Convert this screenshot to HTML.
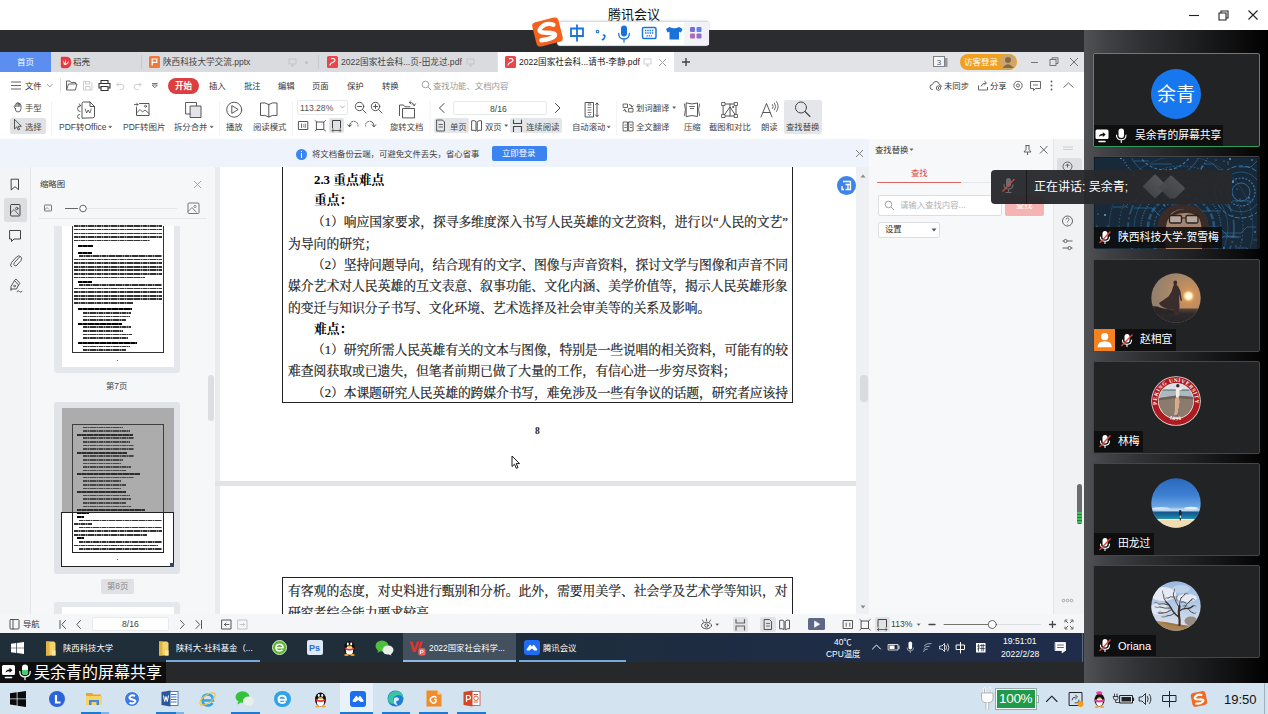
<!DOCTYPE html>
<html><head><meta charset="utf-8">
<style>
*{box-sizing:border-box;margin:0;padding:0}
html,body{width:1268px;height:714px;overflow:hidden;background:#fff}
body{position:relative;font-family:"Liberation Sans",sans-serif;font-size:9px;color:#333}
.a{position:absolute;white-space:nowrap;overflow:hidden}
.v{position:absolute;white-space:nowrap}
svg{position:absolute;overflow:visible}
.t9{font-size:9px;line-height:11px;color:#444}
.doc{font-family:"Liberation Serif",serif;font-size:12.8px;line-height:16px;color:#1a1a1a;height:16px;text-align:justify;text-align-last:justify;white-space:nowrap;overflow:hidden;position:absolute}
.docb{font-family:"Liberation Serif",serif;font-weight:bold;font-size:12.8px;line-height:16px;color:#000;position:absolute;white-space:nowrap}
.s{font-family:"Liberation Sans","Noto Sans CJK SC",sans-serif}
.r{font-family:"Liberation Serif","Noto Serif CJK SC",serif}
</style></head><body>
<!-- ===== TITLE BAR ===== -->
<div class="a" id="titlebar" style="left:0;top:0;width:1268px;height:30px;background:#fff"></div>
<svg style="left:608px;top:18.5px" width="1" height="1"><text class="s" x="0" y="0" font-size="13" fill="#111">腾讯会议</text></svg>
<!-- ===== DARK BANDS / RIGHT PANEL ===== -->
<div class="a" id="darktop" style="left:0;top:30px;width:1084px;height:22px;background:#2a2c2f"></div>
<div class="a" id="rightpanel" style="left:1084px;top:30px;width:184px;height:653px;background:linear-gradient(90deg,#505256 0,#404245 22px,#303235 55px,#202123 105px,#0d0d0e 155px,#000 184px)"></div>
<div class="a" id="darkbot" style="left:0;top:661px;width:1084px;height:22px;background:#26282a"></div>
<!-- ===== SHARED SCREEN ===== -->
<div class="a" id="screen" style="left:0;top:52px;width:1084px;height:609px;background:#fff"></div>
<!--TABBAR-->
<div class="a" style="left:0;top:52px;width:1084px;height:20px;background:#e1e3e7"></div>
<div class="a" style="left:51px;top:52px;width:446px;height:20px;background:#d9dbdf"></div>
<div class="a" style="left:0;top:52px;width:51px;height:20px;background:#5b8ef0;color:#fff;font-size:8.5px;line-height:20px;text-align:center"></div><svg style="left:17px;top:64.95px" width="1" height="1"><text class="s" x="0" y="0" font-size="8.5" fill="#fff">首页</text></svg>
<div class="a" style="left:141px;top:55px;width:1px;height:14px;background:#c8cace"></div>
<div class="a" style="left:318px;top:55px;width:1px;height:14px;background:#c8cace"></div>
<!-- daoke icon -->
<svg style="left:59.500px;top:55.500px" width="12" height="13" viewBox="0 0 12 13"><path d="M1.800 0.800H6Q11.200 0.800 11.200 6.200Q11.200 12.200 5.500 12.200H2.800Q0.800 12.200 0.800 10.200V1.800Q0.800 0.800 1.800 0.800Z" fill="#e8383d"/><path d="M3.300 4L3.600 8.200Q5.500 10 8.300 7.200L8.600 4.500Q7 8 5.700 7.600L6 3Q4.600 5.500 4.800 7.400Z" fill="#fff"/></svg>
<svg style="left:73px;top:64.95px" width="1" height="1"><text class="s" x="0" y="0" font-size="8.5" fill="#333">稻壳</text></svg>
<!-- pptx tab -->
<div class="a" style="left:149px;top:56px;width:11px;height:12px;background:#ed7a3a;border-radius:1.5px"></div>
<svg style="left:149px;top:56px" width="11" height="12" viewBox="0 0 11 12"><path d="M3.2 9.5V3h4.6v3.4H3.2" fill="none" stroke="#fff" stroke-width="1.2"/></svg>
<svg style="left:163px;top:64.98px" width="1" height="1"><text class="s" x="0" y="0" font-size="8.6" fill="#444">陕西科技大学交流.pptx</text></svg>
<svg style="left:288px;top:58px" width="9" height="9" viewBox="0 0 9 9"><rect x="1" y="1" width="7" height="5" fill="none" stroke="#c2c4c8" stroke-width="0.9"/><path d="M3 8h3M4.5 6v2" stroke="#c2c4c8" stroke-width="0.9"/></svg>
<div class="a" style="left:305px;top:60.5px;width:3px;height:3px;border-radius:50%;background:#bfc1c5"></div>
<!-- pdf tab 1 -->
<div class="a" style="left:327px;top:56px;width:11px;height:12px;background:#e8464a;border-radius:1.5px"></div>
<svg style="left:327px;top:56px" width="11" height="12" viewBox="0 0 11 12"><path d="M3 9.5 Q2.6 7.5 5.5 6.5 Q8.6 5.4 7.8 3.4 Q7 2 4 2.8" fill="none" stroke="#fff" stroke-width="1.1"/></svg>
<svg style="left:341px;top:64.98px" width="1" height="1"><text class="s" x="0" y="0" font-size="8.6" fill="#444">2022国家社会科...页-田龙过.pdf</text></svg>
<svg style="left:466px;top:58px" width="9" height="9" viewBox="0 0 9 9"><rect x="1" y="1" width="7" height="5" fill="none" stroke="#c2c4c8" stroke-width="0.9"/><path d="M3 8h3M4.5 6v2" stroke="#c2c4c8" stroke-width="0.9"/></svg>
<!-- active tab -->
<div class="a" style="left:498px;top:52px;width:176px;height:20px;background:#fff"></div>
<div class="a" style="left:505px;top:56px;width:11px;height:12px;background:#e8464a;border-radius:1.5px"></div>
<svg style="left:505px;top:56px" width="11" height="12" viewBox="0 0 11 12"><path d="M3 9.5 Q2.6 7.5 5.5 6.5 Q8.6 5.4 7.8 3.4 Q7 2 4 2.8" fill="none" stroke="#fff" stroke-width="1.1"/></svg>
<svg style="left:519px;top:64.98px" width="1" height="1"><text class="s" x="0" y="0" font-size="8.6" fill="#222">2022国家社会科...请书-李静.pdf</text></svg>
<svg style="left:643px;top:58px" width="9" height="9" viewBox="0 0 9 9"><rect x="1" y="1" width="7" height="5" fill="none" stroke="#c9cbcf" stroke-width="0.9"/><path d="M3 8h3M4.5 6v2" stroke="#c9cbcf" stroke-width="0.9"/></svg>
<svg style="left:658px;top:58px" width="9" height="9" viewBox="0 0 9 9"><path d="M1 1L8 8M8 1L1 8" stroke="#999" stroke-width="0.9"/></svg>
<svg style="left:681px;top:57px" width="10" height="10" viewBox="0 0 10 10"><path d="M5 1V9M1 5H9" stroke="#444" stroke-width="1.4"/></svg>
<!-- right of tabbar -->
<svg style="left:933px;top:55px" width="16" height="13" viewBox="0 0 16 13"><rect x="0.5" y="1.5" width="11" height="10" fill="#f4f5f7" stroke="#777" stroke-width="0.9"/><path d="M12 3h2.5v9H12" fill="#999"/><text x="6" y="10" font-size="8" text-anchor="middle" fill="#555" font-family="Liberation Sans">3</text></svg>
<div class="a" style="left:960px;top:54px;width:57px;height:16px;border-radius:8px;background:#f0a020"></div>
<svg style="left:964px;top:64.95px" width="1" height="1"><text class="s" x="0" y="0" font-size="8.5" fill="#fff">访客登录</text></svg>
<div class="a" style="left:1000px;top:54px;width:16px;height:16px;border-radius:50%;background:#c9a673"></div>
<svg style="left:1000px;top:54px" width="16" height="16" viewBox="0 0 16 16"><circle cx="8" cy="6" r="3" fill="#8a6a3a"/><path d="M2.5 14 Q8 6.5 13.500 14Z" fill="#8a6a3a"/></svg>
<svg style="left:1030px;top:57px" width="52" height="10" viewBox="0 0 52 10"><path d="M1 5.500H8" stroke="#666" stroke-width="0.9"/><rect x="20" y="2.500" width="6" height="6" fill="none" stroke="#666" stroke-width="0.9"/><path d="M22 2.500V0.800H28V6.500H26" fill="none" stroke="#666" stroke-width="0.9"/><path d="M40 1L48 9M48 1L40 9" stroke="#666" stroke-width="0.9"/></svg>
<!--MENUROW-->
<div class="a" style="left:0;top:72px;width:1084px;height:26px;background:#fff"></div>
<svg style="left:10px;top:80px" width="50" height="11" viewBox="0 0 50 11"><path d="M1 2H11M1 5.500H11M1 9H11" stroke="#555" stroke-width="0.9"/><path d="M37 4L39.800 7L42.600 4" fill="none" stroke="#888" stroke-width="0.8"/></svg>
<svg style="left:25px;top:88.91px" width="1" height="1"><text class="s" x="0" y="0" font-size="8.4" fill="#333">文件</text></svg>
<div class="a" style="left:60px;top:78px;width:1px;height:15px;background:#e1e2e5"></div>
<svg style="left:65px;top:79px" width="95" height="13" viewBox="0 0 95 13"><path d="M1.500 11V2H5L6 3.500H10.500V5M1.500 11L3.500 5H12L10.300 11Z" fill="none" stroke="#555" stroke-width="0.9"/>
<path d="M18.500 2.500H25L27 4.500V11H18.500ZM20.500 2.500V5H24.500V2.500M20.500 11V7.500H25V11" fill="none" stroke="#c4c6ca" stroke-width="0.9"/>
<path d="M36 4V1.500H43V4M35.500 9H34V4.500H45V9H43.500M36 7.500H43V11.500H36Z" fill="none" stroke="#333" stroke-width="1.1"/>
<path d="M52 5.500H56.500Q59 5.500 59 8T56.500 10.500H54.500M53.800 3.500L51.800 5.500L53.800 7.500" fill="none" stroke="#c4c6ca" stroke-width="0.9"/>
<path d="M76 5.500H71.500Q69 5.500 69 8T71.500 10.500H73.500M74.200 3.500L76.200 5.500L74.200 7.500" fill="none" stroke="#c4c6ca" stroke-width="0.9"/>
<path d="M87 4.500H92.500M87.300 6L89.800 8.800L92.300 6Z" fill="none" stroke="#555" stroke-width="0.8"/></svg>
<div class="a" style="left:168px;top:78px;width:31px;height:15.500px;border-radius:8px;background:#dc3f3f;color:#fff;font-size:8.6px;font-weight:bold;line-height:15.500px;text-align:center"></div><svg style="left:174.9px;top:88.73px" width="1" height="1"><text class="s" x="0" y="0" font-size="8.6" font-weight="bold" fill="#fff">开始</text></svg>
<svg style="left:209px;top:88.91px" width="1" height="1"><text class="s" x="0" y="0" font-size="8.4" fill="#333">插入</text></svg>
<svg style="left:243.5px;top:88.91px" width="1" height="1"><text class="s" x="0" y="0" font-size="8.4" fill="#333">批注</text></svg>
<svg style="left:278px;top:88.91px" width="1" height="1"><text class="s" x="0" y="0" font-size="8.4" fill="#333">编辑</text></svg>
<svg style="left:312px;top:88.91px" width="1" height="1"><text class="s" x="0" y="0" font-size="8.4" fill="#333">页面</text></svg>
<svg style="left:347px;top:88.91px" width="1" height="1"><text class="s" x="0" y="0" font-size="8.4" fill="#333">保护</text></svg>
<svg style="left:382px;top:88.91px" width="1" height="1"><text class="s" x="0" y="0" font-size="8.4" fill="#333">转换</text></svg>
<svg style="left:421px;top:80px" width="11" height="11" viewBox="0 0 11 11"><circle cx="4.500" cy="4.500" r="3.300" fill="none" stroke="#999" stroke-width="0.9"/><path d="M7 7L10 10" stroke="#999" stroke-width="0.9"/></svg>
<svg style="left:433px;top:88.91px" width="1" height="1"><text class="s" x="0" y="0" font-size="8.4" fill="#999">查找功能、文档内容</text></svg>
<!--MENUROW-R-->
<svg style="left:929px;top:79px" width="150" height="13" viewBox="0 0 150 13"><g fill="none" stroke="#555" stroke-width="0.9">
<path d="M4 10.500H3.500Q1 10.500 1 8T3.500 5.500Q4.200 2.500 7 2.500T10.300 5.500Q12.500 5.800 12.500 8"/><circle cx="9.500" cy="9" r="2.200"/><path d="M9.500 8V10"/>
<path d="M49.500 6.500V11H58.500V8M52 7.500Q53 4 57 4M55.300 2L57.500 4L55.300 6"/>
<circle cx="89" cy="6.500" r="4.200"/><circle cx="89" cy="6.500" r="1.600"/>
<path d="M101.500 2.500H111.500V9.500H106.500L104.500 11.500V9.500H101.500Z"/><path d="M104 6H109" stroke-width="0.8"/>
<path d="M134.500 8.500L139.500 4L144.500 8.500"/></g>
<circle cx="122.500" cy="2.500" r="0.900" fill="#555"/><circle cx="122.500" cy="6.500" r="0.900" fill="#555"/><circle cx="122.500" cy="10.500" r="0.900" fill="#555"/></svg>
<svg style="left:943.5px;top:88.91px" width="1" height="1"><text class="s" x="0" y="0" font-size="8.4" fill="#333">未同步</text></svg>
<svg style="left:990px;top:88.91px" width="1" height="1"><text class="s" x="0" y="0" font-size="8.4" fill="#333">分享</text></svg>
<!--TOOLBAR-->
<div class="a" style="left:0;top:98px;width:1084px;height:41px;background:#fff"></div>
<div class="a" style="left:9.500px;top:117.500px;width:36px;height:16px;background:#e0e2e6;border-radius:2px"></div>
<div class="a" style="left:329px;top:117.500px;width:15px;height:15px;background:#e0e2e6;border-radius:2px"></div>
<div class="a" style="left:433.500px;top:118px;width:35px;height:15px;background:#e4e6ea;border-radius:2px"></div>
<div class="a" style="left:510px;top:118px;width:52px;height:15px;background:#e4e6ea;border-radius:2px"></div>
<div class="a" style="left:783.500px;top:100px;width:38.500px;height:34px;background:#e4e6e9;border-radius:2px"></div>
<div class="a" style="left:296.500px;top:100px;width:51px;height:14.500px;border:1px solid #e6e8ea;border-radius:2px;background:#fff"></div>
<div class="a" style="left:452.500px;top:100.500px;width:94px;height:14.500px;border:1px solid #e6e8ea;border-radius:2px;background:#fff"></div>
<svg style="left:25px;top:111.21px" width="1" height="1"><text class="s" x="0" y="0" font-size="8.4" fill="#444">手型</text></svg>
<svg style="left:25px;top:129.71px" width="1" height="1"><text class="s" x="0" y="0" font-size="8.4" fill="#444">选择</text></svg>
<svg style="left:58.5px;top:130.25px" width="1" height="1"><text class="s" x="0" y="0" font-size="8.5" fill="#444">PDF转Office</text></svg>
<svg style="left:123px;top:130.25px" width="1" height="1"><text class="s" x="0" y="0" font-size="8.5" fill="#444">PDF转图片</text></svg>
<svg style="left:174px;top:130.21px" width="1" height="1"><text class="s" x="0" y="0" font-size="8.4" fill="#444">拆分合并</text></svg>
<svg style="left:226px;top:130.21px" width="1" height="1"><text class="s" x="0" y="0" font-size="8.4" fill="#444">播放</text></svg>
<svg style="left:253px;top:130.21px" width="1" height="1"><text class="s" x="0" y="0" font-size="8.4" fill="#444">阅读模式</text></svg>
<svg style="left:299.5px;top:111.28px" width="1" height="1"><text class="s" x="0" y="0" font-size="8.6" fill="#555">113.28%</text></svg>
<svg style="left:390px;top:130.21px" width="1" height="1"><text class="s" x="0" y="0" font-size="8.4" fill="#444">旋转文档</text></svg>
<svg style="left:489.5px;top:111.78px" width="1" height="1"><text class="s" x="0" y="0" font-size="8.6" fill="#444">8/16</text></svg>
<svg style="left:449.5px;top:129.71px" width="1" height="1"><text class="s" x="0" y="0" font-size="8.4" fill="#444">单页</text></svg>
<svg style="left:485px;top:129.71px" width="1" height="1"><text class="s" x="0" y="0" font-size="8.4" fill="#444">双页</text></svg>
<svg style="left:526px;top:129.71px" width="1" height="1"><text class="s" x="0" y="0" font-size="8.4" fill="#444">连续阅读</text></svg>
<svg style="left:572px;top:130.21px" width="1" height="1"><text class="s" x="0" y="0" font-size="8.4" fill="#444">自动滚动</text></svg>
<svg style="left:636px;top:111.21px" width="1" height="1"><text class="s" x="0" y="0" font-size="8.4" fill="#444">划词翻译</text></svg>
<svg style="left:636px;top:129.71px" width="1" height="1"><text class="s" x="0" y="0" font-size="8.4" fill="#444">全文翻译</text></svg>
<svg style="left:683.5px;top:130.21px" width="1" height="1"><text class="s" x="0" y="0" font-size="8.4" fill="#444">压缩</text></svg>
<svg style="left:709px;top:130.21px" width="1" height="1"><text class="s" x="0" y="0" font-size="8.4" fill="#444">截图和对比</text></svg>
<svg style="left:760.5px;top:130.21px" width="1" height="1"><text class="s" x="0" y="0" font-size="8.4" fill="#444">朗读</text></svg>
<svg style="left:786px;top:130.21px" width="1" height="1"><text class="s" x="0" y="0" font-size="8.4" fill="#444">查找替换</text></svg>
<!--TOOLICONS-->
<svg style="left:0;top:98px" width="1084" height="41" viewBox="0 0 1084 41"><g fill="none" stroke="#444" stroke-width="0.9" stroke-linejoin="round" stroke-linecap="round">
<!-- hand -->
<path d="M15.300 10.500L14.200 8.800Q13.800 7.800 14.800 7.600L15.800 8.500V5.800Q16.300 4.900 17 5.800V5Q17.700 4.200 18.400 5V5.500Q19.100 4.800 19.800 5.600V6.500Q20.600 6 21 7V10.500Q21 14 18 14T15.300 10.500ZM17 5.800V8.500M18.400 5V8.500M19.800 5.600V8.500" stroke-width="0.800"/>
<!-- cursor -->
<path d="M14.500 21.700V31L16.800 28.800L18.300 32L19.600 31.400L18.200 28.300H21Z"/>
<!-- pdf2office -->
<path d="M82 19.800V5.500Q82 4 83.500 4H90L94.500 8.500V18.500Q94.500 19.800 93 19.800ZM90 4V8.500H94.500"/>
<path d="M85.200 11L86.600 15L88.200 12L89.800 15L91.200 11" stroke-width="0.8"/>
<path d="M80.500 7.500Q77.500 7.500 77.500 10.500T80 13.500M79 5.800L80.800 7.500L79 9.200M79.500 16.500Q77.500 16.500 77.500 18.500T79.500 20.500" stroke-width="0.8"/>
<!-- pdf2pic -->
<path d="M139.500 5.500H149V17.500H136.500V9.500"/><path d="M134.500 6.500H138M136.500 5L138 6.500L136.500 8" stroke-width="0.8"/>
<path d="M136.500 15L140 11.500L142.500 14L145 12L149 15.500" stroke-width="0.8"/><circle cx="145.500" cy="8.300" r="1" stroke-width="0.8"/>
<!-- split/merge -->
<path d="M186 4.500H196.500V16H186Z"/><path d="M190.500 8H201V19.500H190.500Z" fill="#e3e5e9"/>
<!-- play -->
<circle cx="234.200" cy="11.700" r="7.500"/><path d="M231.800 8V15.400L237.800 11.700Z"/>
<!-- read mode -->
<path d="M268.800 6.500Q265 4 260.500 5V17.500Q265 16.500 268.800 19Q272.500 16.500 277 17.500V5Q272.500 4 268.800 6.500V19"/>
<!-- zoom out/in -->
<circle cx="359.500" cy="8.500" r="4.200"/><path d="M362.600 11.600L366 15M357.500 8.500H361.500"/>
<circle cx="375.500" cy="8.500" r="4.200"/><path d="M378.600 11.600L382 15M373.500 8.500H377.500M375.500 6.500V10.500"/>
<path d="M340.500 8L342.500 10L344.500 8" stroke="#999" stroke-width="0.8"/>
<!-- row2 small icons -->
<rect x="298.800" y="23.500" width="9" height="8"/><path d="M301.500 26V29.500M305.200 26V29.500M303.400 26.800V27M303.400 28.600V28.800" stroke-width="0.8"/>
<rect x="316.800" y="24" width="7" height="7.500"/><path d="M315 22.500L316.800 24M325.600 22.500L323.800 24M315 33L316.800 31.500M325.600 33L323.800 31.500" stroke-width="0.8"/>
<path d="M332.500 30V22.500H340.500V30" stroke-width="1"/><path d="M332 32.500H341M333.300 31.300L332 32.500L333.300 33.700M339.700 31.300L341 32.500L339.700 33.700" stroke-width="0.8"/>
<path d="M349.500 28.500Q349.500 24 353 23.300" stroke-width="0.9"/><path d="M347.800 26.800L349.500 28.800L351.300 26.800" stroke-width="0.9"/><path d="M354.500 23.300Q358 24 358 28" stroke-dasharray="1.500 1.300" stroke-width="0.8"/>
<path d="M374 28.500Q374 24 370.500 23.300" stroke-width="0.9"/><path d="M372.200 26.800L374 28.800L375.800 26.800" stroke-width="0.9"/><path d="M369 23.300Q365.500 24 365.500 28" stroke-dasharray="1.500 1.300" stroke-width="0.8"/>
<!-- rotate doc -->
<path d="M399.500 17.500V7H403.500L405 8.800H410"/><path d="M402.500 19.500V10.500H414.500V19.500Z"/><path d="M410 4.500Q413.500 4.200 414.200 7.500M412.600 6.300L414.300 7.800L415.500 5.800M410.500 3L409.300 4.600L411 5.800" stroke-width="0.8"/>
<!-- page nav -->
<path d="M444 5.500L439.500 10L444 14.500" stroke-width="1"/><path d="M555.500 5.500L560 10L555.500 14.500" stroke-width="1"/>
<!-- single page -->
<path d="M437 22H442.500L444.500 24V33H437Z"/><path d="M439 26.500H442.500M439 29H442.500" stroke-width="0.8"/>
<!-- double page -->
<path d="M472 22.800Q474.500 22 476 23.500V33Q474.500 31.800 472 32.300ZM477.500 23.500Q479 22 481.500 22.800V32.300Q479 31.800 477.500 33Z"/>
<path d="M505 27L506.200 28.500L507.400 27Z" fill="#555" stroke-width="0.500"/>
<!-- continuous -->
<path d="M513.500 22V25.500H521.500V22M513.500 33.500V28.500H521.500V33.500" stroke-width="1.100"/>
<!-- auto scroll -->
<rect x="585.500" y="4.500" width="8" height="14.500"/><path d="M588 7H591M588 9.500H591M588 12H591M588 14.500H591M588.300 6L589.500 5.300L590.700 6M588.300 16.500L589.500 17.300L590.700 16.500" stroke-width="0.700"/>
<path d="M597 5V18.500M595.500 6.500L597 5L598.500 6.500M595.500 17L597 18.500L598.500 17" stroke-width="0.900"/>
<path d="M607.500 28.500L608.700 30L609.900 28.500Z" fill="#555" stroke-width="0.500"/>
<!-- translate icons -->
<path d="M623.500 6H627.500V9.500H623.500ZM629 10.500H633V14H629ZM629.500 6.500Q632 6.500 632 9M630.800 7.800L632 9.200L633.200 7.800M627 14Q624.500 14 624.500 11.500M623.300 12.600L624.500 11.300L625.700 12.600" stroke-width="0.800"/>
<path d="M673 9L674.200 10.500L675.400 9Z" fill="#555" stroke-width="0.500"/>
<path d="M623.500 24H627.500V33H623.500ZM629 24H633V33H629ZM627.500 25.500L629 24M624.800 27H626.300M624.800 29.500H626.300M630.300 27H631.800M630.300 29.500H631.800" stroke-width="0.800"/>
<!-- compress -->
<path d="M686.500 5Q692 7 697.500 5V18.500Q692 16.500 686.500 18.500Z"/><path d="M684.500 6Q686.500 11.700 684.500 17.500M699.500 6Q697.500 11.700 699.500 17.500M689.500 8.500H694.500M690.300 10.500H693.700" stroke-width="0.800"/>
<!-- screenshot compare -->
<rect x="723.500" y="6" width="12.500" height="12"/><path d="M723.500 18L730 9L736 18M730 6V18" stroke-width="0.900"/>
<rect x="722" y="4.500" width="3" height="3" fill="#fff" stroke-width="0.800"/><rect x="734.500" y="4.500" width="3" height="3" fill="#fff" stroke-width="0.800"/><rect x="722" y="16.500" width="3" height="3" fill="#fff" stroke-width="0.800"/><rect x="734.500" y="16.500" width="3" height="3" fill="#fff" stroke-width="0.800"/>
<circle cx="733" cy="9" r="0.600"/>
<!-- read aloud -->
<path d="M761 19L766.500 5.500L772 19M763 14.500H770"/><path d="M772.500 6.500Q774 8.500 772.500 10.500M774.500 5Q777 8.500 774.500 12M776.500 3.500Q780 8.500 776.500 13.500" stroke-width="0.800"/>
<!-- find replace -->
<circle cx="801" cy="9.500" r="5.500" stroke-width="1"/><path d="M805 13.500L810 18.500" stroke-width="1.100"/>
<!-- dropdown arrows on labels -->
<path d="M109 28.500L110.200 30L111.400 28.500Z" fill="#555" stroke-width="0.500"/>
<path d="M210.500 28.500L211.700 30L212.900 28.500Z" fill="#555" stroke-width="0.500"/>
</g>
<path d="M51.500 3V37M219.500 3V37M292.500 3V37M430 3V37M616.500 3V37" stroke="#f2f3f5" stroke-width="1"/>
</svg>
<!--NOTIFY-->
<div class="a" style="left:0;top:139px;width:869px;height:28px;background:#eff3fb"></div>
<div class="a" style="left:296px;top:148.500px;width:11px;height:11px;border-radius:50%;background:#3a86f2"></div>
<div class="a" style="left:301px;top:150.500px;width:1.400px;height:1.600px;background:#fff"></div>
<div class="a" style="left:301px;top:153px;width:1.400px;height:4.500px;background:#fff"></div>
<svg style="left:311.5px;top:156.91px" width="1" height="1"><text class="s" x="0" y="0" font-size="8.4" fill="#444">将文档备份云端，可避免文件丢失，省心省事</text></svg>
<div class="a" style="left:491.500px;top:146px;width:55px;height:15px;border-radius:2px;background:#3b83f1;color:#fff;font-size:8.4px;line-height:15px;text-align:center"></div><svg style="left:502.2px;top:156.41px" width="1" height="1"><text class="s" x="0" y="0" font-size="8.4" fill="#fff">立即登录</text></svg>
<svg style="left:854.500px;top:149px" width="9" height="9" viewBox="0 0 9 9"><path d="M1 1L8 8M8 1L1 8" stroke="#777" stroke-width="0.9"/></svg>
<!--LEFTSTRIP-->
<div class="a" style="left:0;top:167px;width:30px;height:447px;background:#f3f4f6"></div>
<div class="a" style="left:30px;top:167px;width:1px;height:447px;background:#e6e7ea"></div>
<div class="a" style="left:4px;top:198px;width:23px;height:23.500px;background:#dcdee2;border-radius:2px"></div>
<svg style="left:0;top:167px" width="30" height="140" viewBox="0 0 30 140"><g fill="none" stroke="#444" stroke-width="1" stroke-linejoin="round" stroke-linecap="round">
<path d="M11.500 12.200H18.500V22.700L15 19.700L11.500 22.700Z"/>
<rect x="10.500" y="37.500" width="9.500" height="11.500" rx="1"/><circle cx="16.800" cy="41.500" r="1.200" stroke-width="0.800"/><path d="M10.500 46L14 42.500L18.500 47.500" stroke-width="0.800"/>
<path d="M10 63.500H20.500V72H14L11.500 74.500V72H10Z"/>
<path d="M19.500 90L14.500 95.500Q13 97.500 14.500 98.500T17 98L21 93.500Q22.500 91 20.500 89.500T16.500 90L11.500 95.500Q9.500 98.500 11.500 100" stroke-width="0.900"/>
<path d="M11 123.500V119.500L14.500 113.500L18.500 118L16.500 122H11M14.500 113.500L16 112L20 116.500L18.500 118M17 124.500Q18.500 123 19.500 124.500T22 124.500" stroke-width="0.900"/><circle cx="14.500" cy="119" r="0.900" stroke-width="0.700"/>
</g></svg>
<!--THUMBS-->
<div class="a" style="left:31px;top:167px;width:184px;height:447px;background:#f6f7f9"></div>
<div class="a" style="left:215px;top:167px;width:5px;height:447px;background:#e9ebee"></div>
<svg style="left:39.5px;top:186.91px" width="1" height="1"><text class="s" x="0" y="0" font-size="8.4" fill="#333">缩略图</text></svg>
<svg style="left:193px;top:180px" width="9" height="9" viewBox="0 0 9 9"><path d="M1 1L8 8M8 1L1 8" stroke="#999" stroke-width="0.900"/></svg>
<svg style="left:40px;top:200px" width="165" height="16" viewBox="0 0 165 16"><g fill="none" stroke="#666" stroke-width="0.900">
<rect x="4.500" y="5" width="7" height="6" rx="0.500"/><path d="M4.500 10L7 7.500L9 9.500" stroke-width="0.700"/>
<path d="M25 8.500H38" stroke="#555"/><path d="M46 8.500H137" stroke="#e3e5e8"/><circle cx="43" cy="8.500" r="3.300" fill="#fff" stroke="#555"/>
<rect x="148" y="3" width="11" height="10.500" rx="1"/><path d="M148 11.500L152 7.500L156.500 12.500" stroke-width="0.800"/><circle cx="155" cy="6.500" r="1.100" stroke-width="0.700"/></g></svg>
<div class="a" style="left:39px;top:217.500px;width:168px;height:1px;background:#e3e5e8"></div>
<div class="a" style="left:54px;top:226px;width:126px;height:146.500px;background:#e4e7ec;border-radius:0 0 3px 3px"></div>
<div class="a" style="left:61.500px;top:226px;width:112px;height:141px;background:#fff"></div>
<div class="a" style="left:72px;top:222px;width:91.500px;height:130.500px;border:1px solid #333;background:#fff"></div>
<div class="a" style="left:31px;top:218.500px;width:176px;height:7.500px;background:#f6f7f9"></div>
<div class="a" style="left:73.5px;top:225.0px;width:88.0px;height:1.700px;background:repeating-linear-gradient(90deg,#333 0,#333 1.700px,#8a8a8a 1.700px,#8a8a8a 2.300px)"></div>
<div class="a" style="left:73.5px;top:228.8px;width:88.0px;height:1.700px;background:repeating-linear-gradient(90deg,#333 0,#333 1.700px,#8a8a8a 1.700px,#8a8a8a 2.300px)"></div>
<div class="a" style="left:73.5px;top:232.6px;width:88.0px;height:1.700px;background:repeating-linear-gradient(90deg,#333 0,#333 1.700px,#8a8a8a 1.700px,#8a8a8a 2.300px)"></div>
<div class="a" style="left:73.5px;top:236.1px;width:88.0px;height:1.700px;background:repeating-linear-gradient(90deg,#333 0,#333 1.700px,#8a8a8a 1.700px,#8a8a8a 2.300px)"></div>
<div class="a" style="left:73.5px;top:239.6px;width:76.1px;height:1.700px;background:repeating-linear-gradient(90deg,#333 0,#333 1.700px,#8a8a8a 1.700px,#8a8a8a 2.300px)"></div>
<div class="a" style="left:77.7px;top:245.2px;width:15.1px;height:2.200px;background:repeating-linear-gradient(90deg,#000 0,#000 2px,#444 2px,#444 2.400px)"></div>
<div class="a" style="left:77.7px;top:251.5px;width:13.9px;height:2.200px;background:repeating-linear-gradient(90deg,#000 0,#000 2px,#444 2px,#444 2.400px)"></div>
<div class="a" style="left:79.0px;top:255.3px;width:82.5px;height:1.700px;background:repeating-linear-gradient(90deg,#333 0,#333 1.700px,#8a8a8a 1.700px,#8a8a8a 2.300px)"></div>
<div class="a" style="left:73.5px;top:258.8px;width:88.0px;height:1.700px;background:repeating-linear-gradient(90deg,#333 0,#333 1.700px,#8a8a8a 1.700px,#8a8a8a 2.300px)"></div>
<div class="a" style="left:73.5px;top:262.3px;width:88.0px;height:1.700px;background:repeating-linear-gradient(90deg,#333 0,#333 1.700px,#8a8a8a 1.700px,#8a8a8a 2.300px)"></div>
<div class="a" style="left:73.5px;top:265.9px;width:88.0px;height:1.700px;background:repeating-linear-gradient(90deg,#333 0,#333 1.700px,#8a8a8a 1.700px,#8a8a8a 2.300px)"></div>
<div class="a" style="left:73.5px;top:269.4px;width:88.0px;height:1.700px;background:repeating-linear-gradient(90deg,#333 0,#333 1.700px,#8a8a8a 1.700px,#8a8a8a 2.300px)"></div>
<div class="a" style="left:73.5px;top:272.9px;width:88.0px;height:1.700px;background:repeating-linear-gradient(90deg,#333 0,#333 1.700px,#8a8a8a 1.700px,#8a8a8a 2.300px)"></div>
<div class="a" style="left:73.5px;top:276.5px;width:71.1px;height:1.700px;background:repeating-linear-gradient(90deg,#333 0,#333 1.700px,#8a8a8a 1.700px,#8a8a8a 2.300px)"></div>
<div class="a" style="left:77.7px;top:280.5px;width:13.9px;height:2.200px;background:repeating-linear-gradient(90deg,#000 0,#000 2px,#444 2px,#444 2.400px)"></div>
<div class="a" style="left:79.0px;top:284.3px;width:82.5px;height:1.700px;background:repeating-linear-gradient(90deg,#333 0,#333 1.700px,#8a8a8a 1.700px,#8a8a8a 2.300px)"></div>
<div class="a" style="left:73.5px;top:287.8px;width:88.0px;height:1.700px;background:repeating-linear-gradient(90deg,#333 0,#333 1.700px,#8a8a8a 1.700px,#8a8a8a 2.300px)"></div>
<div class="a" style="left:73.5px;top:291.3px;width:88.0px;height:1.700px;background:repeating-linear-gradient(90deg,#333 0,#333 1.700px,#8a8a8a 1.700px,#8a8a8a 2.300px)"></div>
<div class="a" style="left:73.5px;top:294.9px;width:88.0px;height:1.700px;background:repeating-linear-gradient(90deg,#333 0,#333 1.700px,#8a8a8a 1.700px,#8a8a8a 2.300px)"></div>
<div class="a" style="left:73.5px;top:298.4px;width:88.0px;height:1.700px;background:repeating-linear-gradient(90deg,#333 0,#333 1.700px,#8a8a8a 1.700px,#8a8a8a 2.300px)"></div>
<div class="a" style="left:73.5px;top:301.9px;width:59.7px;height:1.700px;background:repeating-linear-gradient(90deg,#333 0,#333 1.700px,#8a8a8a 1.700px,#8a8a8a 2.300px)"></div>
<div class="a" style="left:77.7px;top:308.3px;width:54.2px;height:2.200px;background:repeating-linear-gradient(90deg,#000 0,#000 2px,#444 2px,#444 2.400px)"></div>
<div class="a" style="left:82.8px;top:312.0px;width:47.9px;height:1.700px;background:repeating-linear-gradient(90deg,#333 0,#333 1.700px,#8a8a8a 1.700px,#8a8a8a 2.300px)"></div>
<div class="a" style="left:82.8px;top:315.6px;width:47.4px;height:1.700px;background:repeating-linear-gradient(90deg,#333 0,#333 1.700px,#8a8a8a 1.700px,#8a8a8a 2.300px)"></div>
<div class="a" style="left:82.8px;top:319.1px;width:42.9px;height:1.700px;background:repeating-linear-gradient(90deg,#333 0,#333 1.700px,#8a8a8a 1.700px,#8a8a8a 2.300px)"></div>
<div class="a" style="left:77.7px;top:322.6px;width:44.1px;height:2.200px;background:repeating-linear-gradient(90deg,#000 0,#000 2px,#444 2px,#444 2.400px)"></div>
<div class="a" style="left:82.8px;top:326.4px;width:48.4px;height:1.700px;background:repeating-linear-gradient(90deg,#333 0,#333 1.700px,#8a8a8a 1.700px,#8a8a8a 2.300px)"></div>
<div class="a" style="left:82.8px;top:329.9px;width:40.4px;height:1.700px;background:repeating-linear-gradient(90deg,#333 0,#333 1.700px,#8a8a8a 1.700px,#8a8a8a 2.300px)"></div>
<div class="a" style="left:82.8px;top:333.5px;width:49.2px;height:1.700px;background:repeating-linear-gradient(90deg,#333 0,#333 1.700px,#8a8a8a 1.700px,#8a8a8a 2.300px)"></div>
<div class="a" style="left:82.8px;top:337.0px;width:45.4px;height:1.700px;background:repeating-linear-gradient(90deg,#333 0,#333 1.700px,#8a8a8a 1.700px,#8a8a8a 2.300px)"></div>
<div class="a" style="left:77.7px;top:342.1px;width:59.3px;height:2.200px;background:repeating-linear-gradient(90deg,#000 0,#000 2px,#444 2px,#444 2.400px)"></div>
<div class="a" style="left:82.8px;top:345.6px;width:47.4px;height:1.700px;background:repeating-linear-gradient(90deg,#333 0,#333 1.700px,#8a8a8a 1.700px,#8a8a8a 2.300px)"></div>
<div class="a" style="left:82.8px;top:349.4px;width:42.9px;height:1.700px;background:repeating-linear-gradient(90deg,#333 0,#333 1.700px,#8a8a8a 1.700px,#8a8a8a 2.300px)"></div>
<div class="a" style="left:116.500px;top:359.500px;width:1.500px;height:1.500px;background:#666"></div>
<svg style="left:106px;top:388.91px" width="1" height="1"><text class="s" x="0" y="0" font-size="8.4" fill="#444">第7页</text></svg>
<div class="a" style="left:54px;top:401.500px;width:126px;height:172px;background:#e0e3e8;border-radius:3px"></div>
<div class="a" style="left:61.500px;top:408px;width:112px;height:158.500px;background:#fff"></div>
<div class="a" style="left:72px;top:424px;width:91.500px;height:129px;border:1px solid #222;background:#fff"></div>
<div class="a" style="left:83.0px;top:426.6px;width:40.3px;height:1.700px;background:repeating-linear-gradient(90deg,#333 0,#333 1.700px,#8a8a8a 1.700px,#8a8a8a 2.300px)"></div>
<div class="a" style="left:83.0px;top:430.2px;width:46.8px;height:1.700px;background:repeating-linear-gradient(90deg,#333 0,#333 1.700px,#8a8a8a 1.700px,#8a8a8a 2.300px)"></div>
<div class="a" style="left:77.4px;top:433.5px;width:55.2px;height:2.200px;background:repeating-linear-gradient(90deg,#000 0,#000 2px,#444 2px,#444 2.400px)"></div>
<div class="a" style="left:83.0px;top:437.4px;width:51.0px;height:1.700px;background:repeating-linear-gradient(90deg,#333 0,#333 1.700px,#8a8a8a 1.700px,#8a8a8a 2.300px)"></div>
<div class="a" style="left:83.0px;top:441.0px;width:46.8px;height:1.700px;background:repeating-linear-gradient(90deg,#333 0,#333 1.700px,#8a8a8a 1.700px,#8a8a8a 2.300px)"></div>
<div class="a" style="left:83.0px;top:444.5px;width:51.0px;height:1.700px;background:repeating-linear-gradient(90deg,#333 0,#333 1.700px,#8a8a8a 1.700px,#8a8a8a 2.300px)"></div>
<div class="a" style="left:83.0px;top:448.1px;width:51.0px;height:1.700px;background:repeating-linear-gradient(90deg,#333 0,#333 1.700px,#8a8a8a 1.700px,#8a8a8a 2.300px)"></div>
<div class="a" style="left:77.4px;top:451.5px;width:49.6px;height:2.200px;background:repeating-linear-gradient(90deg,#000 0,#000 2px,#444 2px,#444 2.400px)"></div>
<div class="a" style="left:83.0px;top:455.3px;width:51.0px;height:1.700px;background:repeating-linear-gradient(90deg,#333 0,#333 1.700px,#8a8a8a 1.700px,#8a8a8a 2.300px)"></div>
<div class="a" style="left:83.0px;top:458.9px;width:40.3px;height:1.700px;background:repeating-linear-gradient(90deg,#333 0,#333 1.700px,#8a8a8a 1.700px,#8a8a8a 2.300px)"></div>
<div class="a" style="left:83.0px;top:462.5px;width:38.4px;height:1.700px;background:repeating-linear-gradient(90deg,#333 0,#333 1.700px,#8a8a8a 1.700px,#8a8a8a 2.300px)"></div>
<div class="a" style="left:83.0px;top:466.0px;width:48.2px;height:1.700px;background:repeating-linear-gradient(90deg,#333 0,#333 1.700px,#8a8a8a 1.700px,#8a8a8a 2.300px)"></div>
<div class="a" style="left:83.0px;top:469.6px;width:42.6px;height:1.700px;background:repeating-linear-gradient(90deg,#333 0,#333 1.700px,#8a8a8a 1.700px,#8a8a8a 2.300px)"></div>
<div class="a" style="left:77.4px;top:473.0px;width:62.2px;height:2.200px;background:repeating-linear-gradient(90deg,#000 0,#000 2px,#444 2px,#444 2.400px)"></div>
<div class="a" style="left:83.0px;top:476.8px;width:51.0px;height:1.700px;background:repeating-linear-gradient(90deg,#333 0,#333 1.700px,#8a8a8a 1.700px,#8a8a8a 2.300px)"></div>
<div class="a" style="left:83.0px;top:480.4px;width:38.4px;height:1.700px;background:repeating-linear-gradient(90deg,#333 0,#333 1.700px,#8a8a8a 1.700px,#8a8a8a 2.300px)"></div>
<div class="a" style="left:83.0px;top:484.0px;width:42.6px;height:1.700px;background:repeating-linear-gradient(90deg,#333 0,#333 1.700px,#8a8a8a 1.700px,#8a8a8a 2.300px)"></div>
<div class="a" style="left:83.0px;top:487.5px;width:38.4px;height:1.700px;background:repeating-linear-gradient(90deg,#333 0,#333 1.700px,#8a8a8a 1.700px,#8a8a8a 2.300px)"></div>
<div class="a" style="left:77.4px;top:490.9px;width:48.2px;height:2.200px;background:repeating-linear-gradient(90deg,#000 0,#000 2px,#444 2px,#444 2.400px)"></div>
<div class="a" style="left:83.0px;top:494.7px;width:46.8px;height:1.700px;background:repeating-linear-gradient(90deg,#333 0,#333 1.700px,#8a8a8a 1.700px,#8a8a8a 2.300px)"></div>
<div class="a" style="left:83.0px;top:498.3px;width:48.2px;height:1.700px;background:repeating-linear-gradient(90deg,#333 0,#333 1.700px,#8a8a8a 1.700px,#8a8a8a 2.300px)"></div>
<div class="a" style="left:83.0px;top:501.9px;width:42.6px;height:1.700px;background:repeating-linear-gradient(90deg,#333 0,#333 1.700px,#8a8a8a 1.700px,#8a8a8a 2.300px)"></div>
<div class="a" style="left:83.0px;top:505.5px;width:48.2px;height:1.700px;background:repeating-linear-gradient(90deg,#333 0,#333 1.700px,#8a8a8a 1.700px,#8a8a8a 2.300px)"></div>
<div class="a" style="left:77.4px;top:508.8px;width:67.8px;height:2.200px;background:repeating-linear-gradient(90deg,#000 0,#000 2px,#444 2px,#444 2.400px)"></div>
<div class="a" style="left:77.4px;top:512.3px;width:11.8px;height:2.200px;background:repeating-linear-gradient(90deg,#000 0,#000 2px,#444 2px,#444 2.400px)"></div>
<div class="a" style="left:77.4px;top:515.7px;width:6.7px;height:2.200px;background:repeating-linear-gradient(90deg,#000 0,#000 2px,#444 2px,#444 2.400px)"></div>
<div class="a" style="left:79.0px;top:519.6px;width:82.5px;height:1.700px;background:repeating-linear-gradient(90deg,#333 0,#333 1.700px,#8a8a8a 1.700px,#8a8a8a 2.300px)"></div>
<div class="a" style="left:73.5px;top:522.9px;width:18.5px;height:1.700px;background:repeating-linear-gradient(90deg,#333 0,#333 1.700px,#8a8a8a 1.700px,#8a8a8a 2.300px)"></div>
<div class="a" style="left:79.0px;top:526.6px;width:82.5px;height:1.700px;background:repeating-linear-gradient(90deg,#333 0,#333 1.700px,#8a8a8a 1.700px,#8a8a8a 2.300px)"></div>
<div class="a" style="left:73.5px;top:530.2px;width:88.0px;height:1.700px;background:repeating-linear-gradient(90deg,#333 0,#333 1.700px,#8a8a8a 1.700px,#8a8a8a 2.300px)"></div>
<div class="a" style="left:73.5px;top:533.9px;width:73.1px;height:1.700px;background:repeating-linear-gradient(90deg,#333 0,#333 1.700px,#8a8a8a 1.700px,#8a8a8a 2.300px)"></div>
<div class="a" style="left:77.4px;top:537.0px;width:6.7px;height:2.200px;background:repeating-linear-gradient(90deg,#000 0,#000 2px,#444 2px,#444 2.400px)"></div>
<div class="a" style="left:79.0px;top:540.9px;width:82.5px;height:1.700px;background:repeating-linear-gradient(90deg,#333 0,#333 1.700px,#8a8a8a 1.700px,#8a8a8a 2.300px)"></div>
<div class="a" style="left:73.5px;top:544.5px;width:84.3px;height:1.700px;background:repeating-linear-gradient(90deg,#333 0,#333 1.700px,#8a8a8a 1.700px,#8a8a8a 2.300px)"></div>
<div class="a" style="left:79.0px;top:548.1px;width:82.5px;height:1.700px;background:repeating-linear-gradient(90deg,#333 0,#333 1.700px,#8a8a8a 1.700px,#8a8a8a 2.300px)"></div>
<div class="a" style="left:116.500px;top:558.500px;width:1.500px;height:1.500px;background:#666"></div>
<div class="a" style="left:61.500px;top:408px;width:112px;height:104px;background:rgba(90,90,90,0.500)"></div>
<div class="a" style="left:61px;top:511.500px;width:113px;height:55.500px;border:1px solid #222"></div>
<div class="a" style="left:170px;top:563px;width:4px;height:4px;background:#3a4560"></div>
<div class="a" style="left:101px;top:579px;width:32.500px;height:14.500px;background:#dfe1e5;border-radius:2px;color:#888;font-size:8.400px;line-height:14.500px;text-align:center"></div><svg style="left:106.52px;top:589.16px" width="1" height="1"><text class="s" x="0" y="0" font-size="8.4" fill="#888">第8页</text></svg>
<div class="a" style="left:54px;top:602px;width:126px;height:12px;background:#e4e7ec;border-radius:3px 3px 0 0"></div>
<div class="a" style="left:61.500px;top:607px;width:112px;height:7px;background:#fff"></div>
<div class="a" style="left:207.500px;top:375px;width:6.500px;height:46px;background:#dcdee2;border-radius:3px"></div>
<!--DOC-->
<div class="a" style="left:220px;top:167px;width:635.500px;height:447px;background:#fff"></div>
<div class="a" style="left:215px;top:481px;width:641px;height:5px;background:#e1e3e6"></div>
<div class="a" style="left:855.500px;top:167px;width:13.500px;height:447px;background:#eef0f3"></div>
<div class="a" style="left:860px;top:374.500px;width:7.500px;height:27.500px;background:#d9dbdf;border-radius:3.500px"></div>
<svg style="left:859px;top:173px" width="8" height="6" viewBox="0 0 8 6"><path d="M1.500 4.500L4 1.500L6.500 4.500Z" fill="#888"/></svg>
<svg style="left:859px;top:604px" width="8" height="6" viewBox="0 0 8 6"><path d="M1.500 1.500L4 4.500L6.500 1.500Z" fill="#888"/></svg>
<div class="a" style="left:281.500px;top:167px;width:511.500px;height:235.500px;border:1.300px solid #222;border-top:none"></div>
<div class="a" style="left:281.500px;top:577px;width:511.500px;height:40px;border:1.300px solid #222;border-bottom:none"></div>
<svg style="left:313.5px;top:183.62px" width="1" height="1"><text class="r" x="0" y="0" font-size="12.8" font-weight="bold" fill="#000">2.3 重点难点</text></svg>
<svg style="left:313.5px;top:204.42px" width="1" height="1"><text class="r" x="0" y="0" font-size="12.8" font-weight="bold" fill="#000">重点：</text></svg>
<svg style="left:311.5px;top:226.12px" width="1" height="1"><text class="r" x="0" y="0" font-size="12.8" fill="#1a1a1a" stroke="#1a1a1a" stroke-width="0.19" textLength="476" lengthAdjust="spacing">（1）响应国家要求，探寻多维度深入书写人民英雄的文艺资料，进行以“人民的文艺”</text></svg>
<svg style="left:288px;top:247.52px" width="1" height="1"><text class="r" x="0" y="0" font-size="12.8" fill="#1a1a1a" stroke="#1a1a1a" stroke-width="0.19">为导向的研究；</text></svg>
<svg style="left:311.5px;top:268.92px" width="1" height="1"><text class="r" x="0" y="0" font-size="12.8" fill="#1a1a1a" stroke="#1a1a1a" stroke-width="0.19" textLength="476" lengthAdjust="spacing">（2）坚持问题导向，结合现有的文字、图像与声音资料，探讨文学与图像和声音不同</text></svg>
<svg style="left:288px;top:290.32px" width="1" height="1"><text class="r" x="0" y="0" font-size="12.8" fill="#1a1a1a" stroke="#1a1a1a" stroke-width="0.19" textLength="499.5" lengthAdjust="spacing">媒介艺术对人民英雄的互文表意、叙事功能、文化内涵、美学价值等，揭示人民英雄形象</text></svg>
<svg style="left:288px;top:311.72px" width="1" height="1"><text class="r" x="0" y="0" font-size="12.8" fill="#1a1a1a" stroke="#1a1a1a" stroke-width="0.19">的变迁与知识分子书写、文化环境、艺术选择及社会审美等的关系及影响。</text></svg>
<svg style="left:313.5px;top:333.12px" width="1" height="1"><text class="r" x="0" y="0" font-size="12.8" font-weight="bold" fill="#000">难点：</text></svg>
<svg style="left:311.5px;top:353.92px" width="1" height="1"><text class="r" x="0" y="0" font-size="12.8" fill="#1a1a1a" stroke="#1a1a1a" stroke-width="0.19" textLength="476" lengthAdjust="spacing">（1）研究所需人民英雄有关的文本与图像，特别是一些说唱的相关资料，可能有的较</text></svg>
<svg style="left:288px;top:375.32px" width="1" height="1"><text class="r" x="0" y="0" font-size="12.8" fill="#1a1a1a" stroke="#1a1a1a" stroke-width="0.19">难查阅获取或已遗失，但笔者前期已做了大量的工作，有信心进一步穷尽资料；</text></svg>
<svg style="left:311.5px;top:396.72px" width="1" height="1"><text class="r" x="0" y="0" font-size="12.8" fill="#1a1a1a" stroke="#1a1a1a" stroke-width="0.19" textLength="476" lengthAdjust="spacing">（2）本课题研究人民英雄的跨媒介书写，难免涉及一些有争议的话题，研究者应该持</text></svg>
<svg style="left:534.5px;top:434.21px" width="1" height="1"><text class="r" x="0" y="0" font-size="9.5" font-weight="bold" fill="#222">8</text></svg>
<svg style="left:288px;top:595.12px" width="1" height="1"><text class="r" x="0" y="0" font-size="12.8" fill="#1a1a1a" stroke="#1a1a1a" stroke-width="0.19" textLength="499.5" lengthAdjust="spacing">有客观的态度，对史料进行甄别和分析。此外，需要用美学、社会学及艺术学等知识，对</text></svg>
<svg style="left:288px;top:616.52px" width="1" height="1"><text class="r" x="0" y="0" font-size="12.8" fill="#1a1a1a" stroke="#1a1a1a" stroke-width="0.19">研究者综合能力要求较高。</text></svg>
<svg style="left:511px;top:455px" width="10" height="15" viewBox="0 0 10 15"><path d="M1 1V11.500L3.500 9.200L5.300 13.300L7 12.500L5.200 8.600H8.500Z" fill="#fff" stroke="#000" stroke-width="0.900" stroke-linejoin="round"/></svg>
<div class="a" style="left:837px;top:176px;width:19px;height:19px;border-radius:50%;background:#3d83ea"></div>
<svg style="left:837px;top:176px" width="19" height="19" viewBox="0 0 19 19"><path d="M6 5.500H13.500V13.500H8.500M8.500 8.500H13.500M11 8.500V13.500M5 10V13.500H7" fill="none" stroke="#fff" stroke-width="1.300"/></svg>
<!--FIND-->
<div class="a" style="left:869px;top:139px;width:184px;height:475px;background:#f7f8fa"></div>
<div class="a" style="left:1053px;top:139px;width:31px;height:475px;background:#f1f2f4;border-left:1px solid #e4e6e9"></div>
<svg style="left:874.5px;top:152.91px" width="1" height="1"><text class="s" x="0" y="0" font-size="8.4" fill="#333">查找替换</text></svg>
<svg style="left:909px;top:148px" width="5" height="4" viewBox="0 0 5 4"><path d="M0.500 0.500L2.500 3L4.500 0.500Z" fill="#666"/></svg>
<svg style="left:1021px;top:144px" width="30" height="12" viewBox="0 0 30 12"><g fill="none" stroke="#555" stroke-width="0.900"><path d="M4.500 1.500H8.500M5 1.500V5.500L3 8H10L8 5.500V1.500M6.500 8V11"/><path d="M19 2L26.500 9.500M26.500 2L19 9.500"/></g></svg>
<svg style="left:910.5px;top:175.91px" width="1" height="1"><text class="s" x="0" y="0" font-size="8.4" fill="#d9433f">查找</text></svg>
<div class="a" style="left:877px;top:182px;width:169px;height:1px;background:#e6e7ea"></div>
<div class="a" style="left:877px;top:181.500px;width:84px;height:1.500px;background:#e0635f"></div>
<div class="a" style="left:877.500px;top:195px;width:124px;height:21px;background:#fff;border:1px solid #dcdee1;border-radius:2px"></div>
<svg style="left:884px;top:200px" width="11" height="11" viewBox="0 0 11 11"><circle cx="4.500" cy="4.500" r="3.300" fill="none" stroke="#999" stroke-width="0.900"/><path d="M7 7L10 10" stroke="#999" stroke-width="0.900"/></svg>
<svg style="left:899.5px;top:208.41px" width="1" height="1"><text class="s" x="0" y="0" font-size="8.4" fill="#b0b2b6">请输入查找内容...</text></svg>
<div class="a" style="left:1005px;top:195px;width:39px;height:21px;background:#f5b3b1;border-radius:2px;color:#fff;font-size:8.400px;line-height:21px;text-align:center"></div><svg style="left:1016.1px;top:208.41px" width="1" height="1"><text class="s" x="0" y="0" font-size="8.4" fill="#fff">查找</text></svg>
<div class="a" style="left:877.500px;top:221.500px;width:62px;height:16.500px;background:#fff;border:1px solid #dcdee1;border-radius:2px"></div>
<svg style="left:885px;top:232.41px" width="1" height="1"><text class="s" x="0" y="0" font-size="8.4" fill="#333">设置</text></svg>
<svg style="left:931px;top:228px" width="6" height="4" viewBox="0 0 6 4"><path d="M0.500 0.500L3 3.500L5.500 0.500Z" fill="#555"/></svg>
<div class="a" style="left:1057px;top:158px;width:25px;height:24px;background:#dddfe3;border-radius:2px"></div>
<svg style="left:1054px;top:139px" width="30" height="475" viewBox="0 0 30 475"><g fill="none" stroke="#555" stroke-width="0.900">
<path d="M9 8H19M9 10.500H19" stroke="#c8cace"/>
<circle cx="13.500" cy="27.500" r="4.500"/><path d="M13.500 25V28.500M11.500 27L13.500 25L15.500 27"/>
<circle cx="13.500" cy="82" r="5"/><path d="M12 80.500Q12 79 13.500 79T15 80.500Q15 81.500 13.500 82.500V83.500M13.500 85V85.500" stroke-width="0.800"/>
<path d="M8.500 102H18.500M8.500 109H18.500" /><circle cx="11.500" cy="102" r="1.600" fill="#f1f2f4"/><circle cx="15.500" cy="109" r="1.600" fill="#f1f2f4"/>
<circle cx="9.500" cy="461.500" r="1.300" stroke="#888" stroke-width="0.700"/><circle cx="13.500" cy="461.500" r="1.300" stroke="#888" stroke-width="0.700"/><circle cx="17.500" cy="461.500" r="1.300" stroke="#888" stroke-width="0.700"/>
</g></svg>
<!--STATUS-->
<div class="a" style="left:0;top:613.500px;width:1084px;height:19.500px;background:#f5f6f8"></div>
<div class="a" style="left:732.500px;top:616.500px;width:15.500px;height:15px;background:#e0e2e6;border-radius:2px"></div>
<div class="a" style="left:760px;top:616.500px;width:16px;height:15px;background:#e0e2e6;border-radius:2px"></div>
<div class="a" style="left:874.500px;top:616.500px;width:15.500px;height:15px;background:#e0e2e6;border-radius:2px"></div>
<div class="a" style="left:92px;top:617px;width:77px;height:14px;background:#fff;border:1px solid #e9eaed;border-radius:2px"></div>
<div class="a" style="left:808px;top:617.500px;width:17px;height:12.500px;background:#5e6884;border-radius:1.500px"></div>
<svg style="left:23px;top:626.91px" width="1" height="1"><text class="s" x="0" y="0" font-size="8.4" fill="#333">导航</text></svg>
<svg style="left:121.5px;top:626.98px" width="1" height="1"><text class="s" x="0" y="0" font-size="8.6" fill="#444">8/16</text></svg>
<svg style="left:891px;top:626.98px" width="1" height="1"><text class="s" x="0" y="0" font-size="8.6" fill="#444">113%</text></svg>
<svg style="left:0;top:613.500px" width="1084" height="19.500" viewBox="0 0 1084 19.500"><g fill="none" stroke="#444" stroke-width="0.900" stroke-linecap="round" stroke-linejoin="round">
<rect x="10" y="5.500" width="9" height="9.500" rx="0.800"/><path d="M13 5.500V15"/>
<path d="M60 6.500V14.500M65.500 6.500L61.800 10.500L65.500 14.500M80.500 6.500L76.800 10.500L80.500 14.500"/>
<path d="M180.500 6.500L184.200 10.500L180.500 14.500M196 6.500L199.700 10.500L196 14.500M201.500 6.500V14.500"/>
<rect x="222" y="6" width="9" height="9"/><path d="M229 10.500H224.500M226 9L224.500 10.500L226 12" stroke-width="0.800"/>
<rect x="238" y="6" width="9" height="9" stroke="#bbb"/><path d="M240 10.500H244.500M243 9L244.500 10.500L243 12" stroke="#bbb" stroke-width="0.800"/>
<ellipse cx="706.500" cy="11.500" rx="5" ry="3.300"/><circle cx="706.500" cy="11.500" r="1.700"/><path d="M706.500 5V6.800M702.500 6L703.300 7.500M710.500 6L709.700 7.500" stroke-width="0.800"/>
<path d="M716 10L717.200 11.500L718.400 10Z" fill="#555" stroke-width="0.400"/>
<path d="M736 5.500V9H744.500V5.500M736 16V12H744.500V16" stroke="#666" stroke-width="1.200"/>
<path d="M764.500 5.500H769.500L771.500 7.500V15.500H764.500Z"/><path d="M766.500 9.500H769.500M766.500 12H769.500" stroke-width="0.700"/>
<path d="M780 6.300Q782.500 5.500 784 7V15.500Q782.500 14.300 780 14.800ZM785.500 7Q787 5.500 789.500 6.300V14.800Q787 14.300 785.500 15.500Z"/>
<path d="M814.500 7.300V13.300L819.500 10.300Z" fill="#fff" stroke="#fff" stroke-width="0.600"/>
<rect x="843.500" y="6.500" width="9" height="8"/><path d="M846.200 9V12.300M849.800 9V12.300" stroke-width="0.800"/>
<rect x="861.500" y="7" width="7" height="7.500"/><path d="M859.800 5.500L861.500 7M870.300 5.500L868.500 7M859.800 16L861.500 14.500M870.300 16L868.500 14.500" stroke-width="0.800"/>
<path d="M878 13V5.500H886.500V13" stroke-width="1"/><path d="M877.500 15.500H887M878.800 14.300L877.500 15.500L878.800 16.700M885.700 14.300L887 15.500L885.700 16.700" stroke-width="0.800"/>
<path d="M917.500 10L918.700 11.500L919.900 10Z" fill="#555" stroke-width="0.400"/>
<path d="M929 10.500H935" stroke-width="1.300"/><path d="M944 10.500H988" stroke="#666"/><path d="M996.500 10.500H1040.500" stroke="#d8dadd"/><circle cx="992.300" cy="10.500" r="4" fill="#fff" stroke="#555"/>
<path d="M1049.500 10.500H1055.500M1052.500 7.500V13.500" stroke-width="1.300"/>
<path d="M1065 8V6H1067M1071 6H1073V8M1073 13V15H1071M1067 15H1065V13M1066 7L1067.800 8.800M1072 7L1070.200 8.800M1072 14L1070.200 12.200M1066 14L1067.800 12.200" stroke-width="0.800"/>
</g></svg>
<!--INNERTASK-->
<div class="a" style="left:0;top:633px;width:1084px;height:28.500px;background:linear-gradient(90deg,#1f2e38 0,#1f2e3a 45%,#1e2c44 70%,#1f2d4b 100%)"></div>
<div class="a" style="left:402.500px;top:633px;width:113px;height:28.500px;background:#43505d"></div>
<div class="a" style="left:166px;top:659.500px;width:93.500px;height:2px;background:#76a9dc"></div>
<div class="a" style="left:402.500px;top:659.500px;width:113px;height:2px;background:#8fb8e2"></div>
<div class="a" style="left:518.500px;top:659.500px;width:107px;height:2px;background:#76a9dc"></div>
<div class="a" style="left:1081.500px;top:633px;width:1px;height:28.500px;background:#5a6880"></div>
<svg style="left:10.500px;top:641.500px" width="13" height="12" viewBox="0 0 13 12"><path d="M0 1.700L5.300 1V5.700H0ZM6 0.900L13 0V5.700H6ZM0 6.300H5.300V11L0 10.300ZM6 6.300H13V12L6 11.100Z" fill="#fff"/></svg>
<!-- folders -->
<svg style="left:45px;top:641px" width="12" height="15" viewBox="0 0 12 15"><path d="M1 0.500H9L10.500 2V14.500H1Z" fill="#f3d36b"/><path d="M1 0.500H4.500V14.500H1Z" fill="#e0b440"/><path d="M7 9.500H10.500V14.500H7Z" fill="#fae7a0"/></svg>
<svg style="left:158px;top:641px" width="12" height="15" viewBox="0 0 12 15"><path d="M1 0.500H9L10.500 2V14.500H1Z" fill="#f3d36b"/><path d="M1 0.500H4.500V14.500H1Z" fill="#e0b440"/><path d="M7 9.500H10.500V14.500H7Z" fill="#fae7a0"/></svg>
<svg style="left:63px;top:650.91px" width="1" height="1"><text class="s" x="0" y="0" font-size="8.4" fill="#fff">陕西科技大学</text></svg>
<svg style="left:176px;top:650.91px" width="1" height="1"><text class="s" x="0" y="0" font-size="8.4" fill="#fff">陕科大-社科基金（...</text></svg>
<!-- 360 -->
<div class="a" style="left:272px;top:640px;width:15px;height:15px;border-radius:50%;background:#5cb531;border:1px solid #d8efc8"></div>
<svg style="left:272px;top:640px" width="15" height="15" viewBox="0 0 15 15"><path d="M4 7.800H11Q11 4.300 7.500 4.300T4 7.800Q4 11 7.500 11Q9.500 11 10.500 9.800" fill="none" stroke="#fff" stroke-width="1.600"/></svg>
<!-- Ps -->
<div class="a" style="left:306.500px;top:640px;width:16px;height:15px;border-radius:2px;background:#dfe8f6;color:#2a6fd0;font-size:9px;font-weight:bold;line-height:15px;text-align:center"></div><svg style="left:309px;top:650.62px" width="1" height="1"><text class="s" x="0" y="0" font-size="9" font-weight="bold" fill="#2a6fd0">Ps</text></svg>
<!-- QQ -->
<svg style="left:342px;top:639px" width="15" height="17" viewBox="0 0 15 17"><ellipse cx="7.500" cy="9" rx="5.500" ry="7" fill="#111"/><ellipse cx="7.500" cy="11.500" rx="3.600" ry="4.300" fill="#fff"/><path d="M2.500 8.500Q7.500 11 12.500 8.500L12 10.500Q7.500 12.500 3 10.500Z" fill="#e5332b"/><ellipse cx="5.800" cy="5" rx="1" ry="1.400" fill="#fff"/><ellipse cx="9.200" cy="5" rx="1" ry="1.400" fill="#fff"/><ellipse cx="7.500" cy="7.500" rx="2.300" ry="0.900" fill="#f5a623"/><ellipse cx="4.500" cy="16" rx="2.300" ry="1" fill="#f5a623"/><ellipse cx="10.500" cy="16" rx="2.300" ry="1" fill="#f5a623"/></svg>
<!-- wechat -->
<svg style="left:375px;top:640px" width="19" height="16" viewBox="0 0 19 16"><ellipse cx="7" cy="6" rx="6.500" ry="5.500" fill="#4cbf3c"/><path d="M3 10L2.500 13L5.500 11Z" fill="#4cbf3c"/><ellipse cx="13" cy="10" rx="5.500" ry="4.500" fill="#e8eee8"/><path d="M15.500 13.500L16.500 15.500L13.500 14.300Z" fill="#e8eee8"/></svg>
<!-- WPS pdf -->
<svg style="left:409px;top:640px" width="17" height="16" viewBox="0 0 17 16"><path d="M0.800 1.500H3.600L5.500 8.500L8 1.500H10.500L6.800 12H4Z" fill="#e2352f"/><path d="M11.300 1.500H14L11.800 7.800H9.200Z" fill="#e2352f"/><rect x="9.300" y="8.300" width="7.200" height="7.200" rx="1.800" fill="#f4605b"/><path d="M11.500 14V10.300H13.200Q14.500 10.500 14.300 11.600T12.500 12.500" fill="none" stroke="#fff" stroke-width="0.900"/></svg>
<svg style="left:429px;top:650.91px" width="1" height="1"><text class="s" x="0" y="0" font-size="8.4" fill="#fff">2022国家社会科学...</text></svg>
<!-- tencent meeting -->
<div class="a" style="left:524px;top:640px;width:15.500px;height:15px;border-radius:3px;background:#1f6df2"></div>
<svg style="left:524px;top:640px" width="15.500" height="15" viewBox="0 0 15.500 15"><path d="M2.600 9.300L5.600 5Q6.200 4.400 6.800 5L7.900 6.700L9 5Q9.600 4.400 10.200 5L13.200 9.300Q13.500 10.600 12.300 10.600H10.300L7.900 8.600L5.500 10.600H3.500Q2.300 10.600 2.600 9.300Z" fill="#fff"/></svg>
<svg style="left:542.5px;top:650.91px" width="1" height="1"><text class="s" x="0" y="0" font-size="8.4" fill="#fff">腾讯会议</text></svg>
<!-- tray -->
<svg style="left:834.14px;top:644.91px" width="1" height="1"><text class="s" x="0" y="0" font-size="8.4" fill="#fff">40℃</text></svg>
<svg style="left:826.23px;top:656.91px" width="1" height="1"><text class="s" x="0" y="0" font-size="8.4" fill="#fff">CPU温度</text></svg>
<svg style="left:870px;top:638px" width="200" height="20" viewBox="0 0 200 20"><g fill="none" stroke="#fff" stroke-width="1" stroke-linecap="round" stroke-linejoin="round">
<path d="M2.500 11L6.500 7L10.500 11"/>
<rect x="18.500" y="6.500" width="9.500" height="5.500" stroke-width="0.800"/><rect x="19.500" y="7.500" width="5" height="3.500" fill="#fff" stroke="none"/><path d="M29 8V10.500" stroke-width="0.900"/>
<rect x="38.500" y="3.500" width="3.600" height="8" rx="1.800" fill="#fff" stroke="none"/><path d="M37 10Q37 13 40.300 13T43.600 10M40.300 13V14.500" stroke-width="0.700" stroke="#ccc"/>
<path d="M54 14Q54 11 57.500 11M54 11Q55 8 59 8M54 8Q56 5 60.500 5" stroke-width="0.800" stroke="#b8c0cc" transform="rotate(8 57 10)"/>
<path d="M70 8H72L74.500 5.500V13.500L72 11H70Z" stroke-width="0.800"/><path d="M76 7.500Q77.200 9.500 76 11.500M77.800 6Q80 9.500 77.800 13" stroke-width="0.800"/>
<path d="M86.500 7H94.500V11.500H86.500ZM90.500 4.500V15" stroke-width="1"/>
<rect x="106" y="5" width="9.500" height="9.500" fill="#fff" stroke="none"/><path d="M107.500 8H109.500M108.500 6.500V13M107.500 11L109.500 10M110.500 7.500H114.500M110.500 10.500H114.500M111.800 6.500V13M113.300 6.500V13" stroke="#1c2b48" stroke-width="0.700"/>
<rect x="185.500" y="4.500" width="10" height="8" stroke-width="0.800" fill="#fff"/><path d="M187.500 7H193.500M187.500 9.500H193.500" stroke="#1c2b48" stroke-width="0.700"/><path d="M192 12.500V15L195.500 12.500" fill="#fff" stroke-width="0.600"/>
</g></svg>
<svg style="left:1003.26px;top:644.48px" width="1" height="1"><text class="s" x="0" y="0" font-size="8.6" fill="#fff">19:51:01</text></svg>
<svg style="left:1000.87px;top:656.98px" width="1" height="1"><text class="s" x="0" y="0" font-size="8.6" fill="#fff">2022/2/28</text></svg>
<!--BANDLABEL-->
<div class="a" style="left:0;top:661.500px;width:165.500px;height:21.500px;background:#0e0e0f"></div>
<svg style="left:2px;top:664px" width="30" height="18" viewBox="0 0 30 18"><rect x="0" y="1" width="13" height="10" rx="1.500" fill="#fff"/><path d="M3.500 13.500H9.500" stroke="#fff" stroke-width="1.600" stroke-linecap="round"/><path d="M3.500 8.500Q4 5.500 7.500 5.500V3.800L10.500 6.300L7.500 8.800V7.200Q5.500 7.100 3.500 8.500Z" fill="#111"/>
<rect x="20" y="0.500" width="6" height="10.500" rx="3" fill="#fff"/><path d="M20 6H26V8Q26 11 23 11T20 8Z" fill="#3fd070"/><path d="M17.800 7.500Q17.800 12.800 23 12.800T28.200 7.500M23 12.800V15.500" fill="none" stroke="#fff" stroke-width="1.300" stroke-linecap="round"/></svg>
<svg style="left:34px;top:678.04px" width="1" height="1"><text class="s" x="0" y="0" font-size="16" fill="#fff">吴余青的屏幕共享</text></svg>
<!-- ===== WINDOWS TASKBAR ===== -->
<div class="a" id="wintask" style="left:0;top:683px;width:1268px;height:31px;background:#d4e3f0"></div>
<!--WINTASK-->
<div class="a" style="left:340px;top:683px;width:33px;height:31px;background:#e9f1f9"></div>
<div class="a" style="left:81px;top:711.500px;width:20px;height:2.500px;background:#1f78d2"></div><div class="a" style="left:101px;top:711.500px;width:7.500px;height:2.500px;background:#7fb2e6"></div>
<div class="a" style="left:156px;top:711.500px;width:20px;height:2.500px;background:#1f78d2"></div><div class="a" style="left:176px;top:711.500px;width:8px;height:2.500px;background:#7fb2e6"></div>
<div class="a" style="left:231px;top:711.500px;width:28.500px;height:2.500px;background:#1f78d2"></div>
<div class="a" style="left:340px;top:711.500px;width:33px;height:2.500px;background:#1f78d2"></div>
<div class="a" style="left:382px;top:711.500px;width:28px;height:2.500px;background:#1f78d2"></div>
<div class="a" style="left:419px;top:711.500px;width:28.500px;height:2.500px;background:#1f78d2"></div>
<div class="a" style="left:456.500px;top:711.500px;width:29px;height:2.500px;background:#1f78d2"></div>
<svg style="left:10px;top:691px" width="16" height="16" viewBox="0 0 16 16"><path d="M0 2.300L6.700 1.300V7.500H0ZM7.500 1.200L16 0V7.500H7.500ZM0 8.300H6.700V14.600L0 13.600ZM7.500 8.300H16V16L7.500 14.800Z" fill="#0a0a0a"/></svg>
<!-- L icon -->
<div class="a" style="left:48.500px;top:690.500px;width:16.500px;height:16.500px;border-radius:50%;background:#2b63d9"></div>
<svg style="left:48.500px;top:690.500px" width="16.500" height="16.500" viewBox="0 0 16.500 16.500"><path d="M7 4V11.500H11.500" fill="none" stroke="#fff" stroke-width="2.200"/></svg>
<!-- explorer -->
<svg style="left:85px;top:691px" width="18" height="16" viewBox="0 0 18 16"><path d="M1 2H7L8.500 3.500H16V6H1Z" fill="#e9a62a"/><path d="M1 5H17V14H1Z" fill="#f8d36a"/><path d="M4 9H14V14H4Z" fill="#3b8de0"/><path d="M6.500 11H11.500V14H6.500Z" fill="#f8d36a"/></svg>
<!-- sogou browser -->
<div class="a" style="left:123.500px;top:690.500px;width:16.500px;height:16.500px;border-radius:50%;background:#3d7be0;border:1.500px solid #e8f0fb"></div>
<svg style="left:123.500px;top:690.500px" width="16.500" height="16.500" viewBox="0 0 16.500 16.500"><path d="M11 5Q8 3.500 6 5.500T8.500 8.500T10.500 11.500T5.500 11.500" fill="none" stroke="#fff" stroke-width="2"/></svg>
<!-- word -->
<svg style="left:161px;top:690px" width="18" height="17" viewBox="0 0 18 17"><rect x="7" y="1.500" width="10" height="14" fill="#fff" stroke="#2b5fb5" stroke-width="0.800"/><path d="M10 4.500H15.500M10 7H15.500M10 9.500H15.500M10 12H15.500" stroke="#2b5fb5" stroke-width="0.900"/><path d="M0.500 2L9.500 0.500V16.500L0.500 15Z" fill="#2b579a"/><path d="M2.500 5.500L3.700 11.500L5 6.500L6.300 11.500L7.500 5.500" fill="none" stroke="#fff" stroke-width="1"/></svg>
<!-- IE -->
<svg style="left:198px;top:689.500px" width="19" height="18" viewBox="0 0 19 18"><path d="M5 10.500H15Q15 4.500 9.700 4.500T4.500 10Q4.500 15.500 9.700 15.500Q13 15.500 14.500 13" fill="none" stroke="#35a3e8" stroke-width="2.500"/><ellipse cx="9.500" cy="9" rx="9" ry="4" fill="none" stroke="#f2c431" stroke-width="1.100" transform="rotate(-35 9.500 9)"/></svg>
<!-- wechat -->
<svg style="left:235px;top:691px" width="20" height="16" viewBox="0 0 20 16"><ellipse cx="7.500" cy="6" rx="7" ry="5.800" fill="#35c13a"/><path d="M3 10.500L2.500 13.500L6 11.500Z" fill="#35c13a"/><ellipse cx="13.500" cy="10" rx="5.500" ry="4.500" fill="#e9efe9"/><path d="M16 13.500L17 15.500L14 14.300Z" fill="#e9efe9"/></svg>
<!-- 360 blue e -->
<div class="a" style="left:274px;top:690.500px;width:16.500px;height:16.500px;border-radius:50%;background:#2da3ea"></div>
<svg style="left:274px;top:690.500px" width="16.500" height="16.500" viewBox="0 0 16.500 16.500"><path d="M4.500 8.800H12Q12 4.800 8.200 4.800T4.500 8.500Q4.500 12 8.200 12Q10.500 12 11.500 10.500" fill="none" stroke="#fff" stroke-width="1.900"/></svg>
<!-- QQ -->
<svg style="left:313px;top:689.500px" width="15" height="18" viewBox="0 0 15 17"><ellipse cx="7.500" cy="9" rx="5.500" ry="7" fill="#111"/><ellipse cx="7.500" cy="11.500" rx="3.600" ry="4.300" fill="#fff"/><path d="M2.500 8.500Q7.500 11 12.500 8.500L12 10.500Q7.500 12.500 3 10.500Z" fill="#e5332b"/><ellipse cx="5.800" cy="5" rx="1" ry="1.400" fill="#fff"/><ellipse cx="9.200" cy="5" rx="1" ry="1.400" fill="#fff"/><ellipse cx="7.500" cy="7.500" rx="2.300" ry="0.900" fill="#f5a623"/><ellipse cx="4.500" cy="16" rx="2.300" ry="1" fill="#f5a623"/><ellipse cx="10.500" cy="16" rx="2.300" ry="1" fill="#f5a623"/></svg>
<!-- tencent meeting -->
<div class="a" style="left:349.500px;top:691px;width:16px;height:15.500px;border-radius:3px;background:#1f6df2"></div>
<svg style="left:349.500px;top:691px" width="16" height="15.500" viewBox="0 0 15.500 15"><path d="M2.600 9.300L5.600 5Q6.200 4.400 6.800 5L7.900 6.700L9 5Q9.600 4.400 10.200 5L13.200 9.300Q13.500 10.600 12.300 10.600H10.300L7.900 8.600L5.500 10.600H3.500Q2.300 10.600 2.600 9.300Z" fill="#fff"/></svg>
<!-- edge -->
<svg style="left:387px;top:690px" width="17" height="17" viewBox="0 0 17 17"><circle cx="8.500" cy="8.500" r="8" fill="#1d7fd4"/><path d="M1 10Q1 2 8.500 1Q15.500 1 16.200 7.500Q12 3 7 7Q5 10 7.500 13.500Q2.500 14.500 1 10Z" fill="#3cc6a0"/><path d="M7 8.500Q9.500 6 12 8.500Q12 11 9.500 11Q8.500 13.500 11.500 15.500Q5.500 15.500 7 8.500Z" fill="#d8ecfb"/></svg>
<!-- orange app -->
<svg style="left:425.500px;top:690px" width="16" height="17" viewBox="0 0 16 17"><path d="M0.500 0.500H11.500L15.500 4.500V16.500H0.500Z" fill="#f28c28"/><path d="M11.500 0.500V4.500H15.500Z" fill="#fbd0a0"/><path d="M10.500 7.500Q8 5.500 5.500 7.500T5.500 12T10 11.500V9.500H8" fill="none" stroke="#fff" stroke-width="1.500"/></svg>
<!-- ppt -->
<svg style="left:462.500px;top:690px" width="18" height="17" viewBox="0 0 18 17"><rect x="7" y="1.500" width="10" height="14" fill="#fff" stroke="#d04a26" stroke-width="0.800"/><path d="M10.500 4.500H15M10.500 12H15" stroke="#d04a26" stroke-width="0.900"/><circle cx="13" cy="8.300" r="2.200" fill="none" stroke="#d04a26" stroke-width="0.900"/><path d="M0.500 2L9.500 0.500V16.500L0.500 15Z" fill="#d24726"/><path d="M3.500 12V5.500H6Q7.500 5.800 7.500 7.500T6 9.300H3.500" fill="none" stroke="#fff" stroke-width="1.200"/></svg>
<!-- right tray -->
<svg style="left:980px;top:687px" width="16" height="24" viewBox="0 0 16 24"><path d="M4.500 1.500V6M10 1.500V6" stroke="#fff" stroke-width="2.400" stroke-linecap="round"/><path d="M4.500 1.500V6M10 1.500V6" stroke="#888" stroke-width="0.600"/><path d="M1.500 6H13V11Q13 15.500 8.500 15.500H6Q1.500 15.500 1.500 11Z" fill="#fff" stroke="#999" stroke-width="0.700"/><path d="M7.300 15.500V22" stroke="#fff" stroke-width="2.600"/><path d="M6 15.500V22.500M8.600 15.500V22.500" stroke="#999" stroke-width="0.600"/></svg>
<div class="a" style="left:995.500px;top:688.500px;width:40.500px;height:20.500px;background:#1f9a4b;border:1.500px solid #fff;outline:0.500px solid #9aa;color:#fff;font-size:13.500px;line-height:17px;text-align:center;letter-spacing:-0.300px"></div><svg style="left:999.09px;top:703.18px" width="1" height="1"><text class="s" x="0" y="0" font-size="13.5" fill="#fff" letter-spacing="-0.3">100%</text></svg>
<div class="a" style="left:1036px;top:694.500px;width:2.500px;height:8px;background:#fff;border:0.500px solid #9aa"></div>
<svg style="left:1044px;top:688px" width="220" height="22" viewBox="0 0 220 22"><g fill="none" stroke="#222" stroke-width="1.100" stroke-linecap="round" stroke-linejoin="round">
<path d="M2.500 13.500L7.800 8.200L13 13.500"/>
<path d="M25.500 4.500H38V17.500H25.500Z" stroke-width="1"/><path d="M28 12Q28 9 31.500 9M31.500 7L33.500 9L31.500 11M35 12Q35 15 31 15" stroke-width="0.800"/><circle cx="36.500" cy="16" r="3" fill="#f39a1f" stroke="none"/>
<path d="M70.500 6V8.500M73 6V8.500M69.500 8.500H74V10.500Q74 12 72 12H71.500Q69.500 12 69.500 10.500ZM71.700 12V14.500H76" stroke-width="0.800"/><rect x="76" y="7.500" width="12.500" height="7.500" stroke-width="1"/><rect x="77.500" y="9" width="9.500" height="4.500" fill="#222" stroke="none"/><path d="M89.500 10V12.500" stroke-width="1.200"/>
<path d="M95.500 9H98L101.500 5.500V16.500L98 13H95.500Z" stroke-width="0.900"/><path d="M103.500 8.500Q105 11 103.500 13.500M105.500 6.500Q108.500 11 105.500 15.500" stroke-width="0.900"/>
<path d="M119 7.500H132V13.500H119ZM125.500 3.500V19" stroke-width="1"/>
</g>
<ellipse cx="55.500" cy="12" rx="5" ry="6.500" fill="#111"/><ellipse cx="55.500" cy="14" rx="3.300" ry="4" fill="#fff"/><path d="M50.500 11Q55.500 13.500 60.500 11L60.200 13.500Q55.500 15.500 50.800 13.500Z" fill="#e83f9a"/><path d="M52 4.500Q55 2 58.500 4.500L57.500 6.500H53Z" fill="#e83f9a"/><ellipse cx="55.500" cy="10" rx="2" ry="0.800" fill="#f5a623"/><ellipse cx="52.800" cy="19" rx="2" ry="0.900" fill="#f5a623"/><ellipse cx="58.200" cy="19" rx="2" ry="0.900" fill="#f5a623"/>
<g transform="translate(155 11) rotate(-12)"><rect x="-7.500" y="-7" width="15" height="14" rx="3" fill="#f26a21"/><path d="M4 -3Q0 -5.500 -3 -3T0 0.500T3 3.500T-4.500 3.500" fill="none" stroke="#fff" stroke-width="2.200"/></g>
</svg>
<svg style="left:1223.5px;top:703.5px" width="1" height="1"><text class="s" x="0" y="0" font-size="13" fill="#111">19:50</text></svg>
<div class="a" style="left:1264px;top:683px;width:1px;height:31px;background:#9fb0c0"></div>
<!--TILES-->
<div class="a" style="left:1092.5px;top:53.0px;width:167px;height:94.0px;background:#212325;border:1px solid #2f9e5f;border-radius:2px"></div>
<div class="a" style="left:1092.5px;top:156.3px;width:167px;height:93.2px;background:#212325;border:1px solid #44464a;border-radius:2px"></div>
<div class="a" style="left:1092.5px;top:259.0px;width:167px;height:92.7px;background:#212325;border:1px solid #44464a;border-radius:2px"></div>
<div class="a" style="left:1092.5px;top:361.0px;width:167px;height:92.5px;background:#212325;border:1px solid #44464a;border-radius:2px"></div>
<div class="a" style="left:1092.5px;top:463.0px;width:167px;height:92.7px;background:#212325;border:1px solid #44464a;border-radius:2px"></div>
<div class="a" style="left:1092.5px;top:565.2px;width:167px;height:92.4px;background:#212325;border:1px solid #44464a;border-radius:2px"></div>
<div class="a" style="left:1093.500px;top:157.3px;width:166px;height:91.2px;background:radial-gradient(ellipse at 50% 45%,#2a4a66 0,#1d3245 35%,#14222f 70%,#101a24 100%)"></div>
<svg style="left:1094.500px;top:157.500px;overflow:hidden" width="164" height="91.500" viewBox="0 0 164 91.500"><rect width="164" height="91.500" fill="#18293a"/><g fill="none" stroke="#3f86b8" stroke-width="0.700" opacity="0.850"><circle cx="86" cy="70" r="22" stroke-width="2.2" opacity="0.9"/><circle cx="86" cy="70" r="27" stroke-width="1" opacity="0.8" stroke-dasharray="2 1.500"/><circle cx="86" cy="70" r="33" stroke-width="2.6" opacity="0.55" stroke-dasharray="6 2"/><circle cx="86" cy="70" r="40" stroke-width="1.4" opacity="0.8" stroke-dasharray="1 1.500"/><circle cx="86" cy="70" r="47" stroke-width="0.6" opacity="0.7"/><circle cx="86" cy="70" r="53" stroke-width="1.8" opacity="0.5" stroke-dasharray="10 3 2 3"/><circle cx="86" cy="70" r="62" stroke-width="1" opacity="0.7" stroke-dasharray="1.500 2"/><circle cx="86" cy="70" r="72" stroke-width="0.5" opacity="0.6"/><circle cx="146" cy="34" r="9" stroke-width="0.8"/><circle cx="146" cy="34" r="14" stroke-width="1.2" stroke-dasharray="2 1.500"/><circle cx="146" cy="34" r="20" stroke-width="0.5"/><circle cx="146" cy="34" r="26" stroke-width="1" stroke-dasharray="5 2"/><circle cx="70" cy="-18" r="30" stroke-width="1.2" stroke-dasharray="3 2"/><circle cx="70" cy="-18" r="38" stroke-width="0.6"/><circle cx="70" cy="-18" r="46" stroke-width="1.6" stroke-dasharray="1 2"/><path d="M39 50h18l10 10h9M78 53h8l6 -6h4M43 21h25l10 10h12M137 43h12l3 0h6M104 79h25l3 0h12M110 6h8l6 6h4M128 75h18l6 -6h9M98 84h25l6 -6h12M65 73h25l3 0h12M144 9h12l6 -6h6M36 88h25l6 6h12M69 76h18l10 10h9M96 53h18l3 0h9M140 90h12l6 6h6M158 82h8l3 0h4M104 90h18l6 6h9M20 44h25l3 0h12M56 6h12l3 0h6M48 70h8l3 0h4M99 69h25l10 10h12M54 80h18l10 10h9M39 3h8l3 0h4M18 49h12l6 -6h6M48 24h8l6 6h4M51 87h25l6 -6h12M76 47h8l10 10h4" stroke-width="0.600"/></g><g fill="#8cc4ea" opacity="0.800"><circle cx="160" cy="74" r="0.8"/><circle cx="71" cy="66" r="0.6"/><circle cx="154" cy="40" r="0.8"/><circle cx="85" cy="50" r="0.5"/><circle cx="129" cy="90" r="0.8"/><circle cx="3" cy="56" r="0.6"/><circle cx="10" cy="57" r="1.0"/><circle cx="58" cy="83" r="0.8"/><circle cx="121" cy="2" r="0.5"/><circle cx="157" cy="2" r="0.8"/><circle cx="41" cy="42" r="0.8"/><circle cx="29" cy="17" r="0.8"/><circle cx="138" cy="24" r="1.0"/><circle cx="17" cy="74" r="0.6"/><circle cx="51" cy="20" r="0.8"/><circle cx="39" cy="17" r="1.0"/><circle cx="107" cy="9" r="0.8"/><circle cx="156" cy="61" r="0.6"/><circle cx="72" cy="78" r="0.6"/><circle cx="13" cy="68" r="0.6"/><circle cx="145" cy="41" r="0.6"/><circle cx="129" cy="3" r="0.6"/><circle cx="52" cy="76" r="0.6"/><circle cx="142" cy="31" r="0.5"/><circle cx="132" cy="31" r="0.6"/><circle cx="69" cy="47" r="0.8"/><circle cx="76" cy="58" r="0.8"/><circle cx="69" cy="37" r="1.0"/><circle cx="26" cy="0" r="1.0"/><circle cx="92" cy="90" r="0.6"/><circle cx="5" cy="42" r="0.8"/><circle cx="89" cy="81" r="0.5"/><circle cx="141" cy="88" r="0.5"/><circle cx="133" cy="4" r="0.6"/><circle cx="147" cy="82" r="0.5"/><circle cx="2" cy="68" r="0.6"/><circle cx="83" cy="22" r="0.5"/><circle cx="86" cy="38" r="0.5"/><circle cx="56" cy="23" r="1.0"/><circle cx="133" cy="6" r="0.6"/><circle cx="32" cy="49" r="0.5"/><circle cx="28" cy="72" r="0.6"/><circle cx="135" cy="1" r="1.0"/><circle cx="8" cy="25" r="0.8"/><circle cx="101" cy="47" r="0.5"/></g><path d="M62 91.500Q60 58 70 52Q80 44 94 47Q112 50 114 70L116 91.500Z" fill="#3a2b27"/><path d="M71 91.500Q68 62 78 54Q88 48 100 54Q109 62 107 91.500Z" fill="#a48574"/><path d="M70 64Q78 50 92 51Q104 52 109 64Q100 54 90 55Q78 55 70 64Z" fill="#3a2b27"/><g fill="#b9a59a" stroke="#26221f" stroke-width="1.300"><rect x="74.500" y="57.500" width="12" height="7.500" rx="1.500"/><rect x="91" y="57.500" width="12" height="7.500" rx="1.500"/></g><path d="M86.500 60H91" stroke="#26221f" stroke-width="1"/><rect x="162" width="2" height="91.500" fill="#1a1c1e"/></svg>
<div class="a" style="left:1151px;top:69px;width:50px;height:50px;border-radius:50%;background:#1677ee;color:#fff;font-size:19px;line-height:50px;text-align:center"></div><svg style="left:1157px;top:100.58px" width="1" height="1"><text class="s" x="0" y="0" font-size="19" fill="#fff">余青</text></svg>
<svg style="left:1151px;top:273px" width="50" height="50" viewBox="0 0 50 50"><defs><clipPath id="c3"><circle cx="25" cy="25" r="24.700"/></clipPath><radialGradient id="g3" gradientUnits="userSpaceOnUse" cx="37.500" cy="23" r="34"><stop offset="0" stop-color="#e9a860"/><stop offset="0.250" stop-color="#c98f5c"/><stop offset="0.600" stop-color="#a88868"/><stop offset="1" stop-color="#94806c"/></radialGradient><radialGradient id="s3"><stop offset="0" stop-color="#fffdf0"/><stop offset="0.550" stop-color="#fff3c8"/><stop offset="1" stop-color="#f3c070" stop-opacity="0"/></radialGradient><linearGradient id="h3" x1="0" y1="0" x2="0" y2="1"><stop offset="0" stop-color="#5a4538"/><stop offset="0.350" stop-color="#2e2a2b"/><stop offset="1" stop-color="#242527"/></linearGradient></defs>
<g clip-path="url(#c3)"><rect width="50" height="50" fill="url(#g3)"/><rect y="35.500" width="50" height="15" fill="url(#h3)"/><circle cx="37.500" cy="23" r="6" fill="url(#s3)"/>
<path d="M0 33L6 33.500Q12 36 20 37L30 41H0Z" fill="#2a2627"/>
<path d="M22.500 8.500Q24.500 6.500 26 8.500Q26.500 10.500 25.500 11.500L27.500 14Q29.500 17 30 22L31 28L29.500 27.500L28 21L28.500 34L27.500 42H23.500L22 36Q16 37.500 9 32L8 30Q14 26 17.500 23.500Q21 19 22 14L23 11.500Q22 10 22.500 8.500Z" fill="#3a2d2b"/></g></svg>
<svg style="left:1151px;top:375.500px" width="50" height="50" viewBox="0 0 50 50"><defs><clipPath id="c4"><circle cx="25" cy="25" r="17.300"/></clipPath><path id="a4" d="M6.300 29.500A19.200 19.200 0 1 1 43.700 29.500"/><path id="b4" d="M15 41.500A19.500 19.500 0 0 0 35 41.500"/></defs>
<circle cx="25" cy="25" r="24.800" fill="#f1dede"/><circle cx="25" cy="25" r="24" fill="#ad1a1f"/><circle cx="25" cy="25" r="18" fill="#f3e6e2"/>
<g clip-path="url(#c4)"><rect x="7" y="7" width="36" height="36" fill="#d6dee7"/><rect x="7" y="13.500" width="36" height="1.300" fill="#5c6a58"/><rect x="7" y="14.800" width="36" height="6" fill="#aab9c2"/><path d="M7 22L26 19.500L43 21V43H7Z" fill="#8b7b6d"/><path d="M7 22L26 19.500L43 21V23.500L26 22L7 24.500Z" fill="#6d6158"/><path d="M26 22V43" stroke="#5e544c" stroke-width="0.800"/>
<path d="M25.500 9.500Q26.800 8 28 9.500L28.200 12Q30.500 12.500 31.500 11L32 11.800Q30.500 14.500 28.500 14.500L28.500 20L27.500 21Q29 26 27.500 31L26 38.500H23.500L24.500 31Q23.500 25 25 21L24.800 15Q24.500 12.500 25.500 12Z" fill="#f2ece6"/><path d="M25.200 21Q27.500 22 28 21.500Q29.200 26 27.500 31L26 38.500H23.500L24.500 31Q23.500 25 25.200 21Z" fill="#d9a98a"/><circle cx="26.800" cy="9.800" r="1.700" fill="#3a2a25"/></g>
<text font-family="Liberation Serif" font-weight="bold" font-size="5.400" fill="#fff" letter-spacing="0.550"><textPath href="#a4" startOffset="1">PEKING UNIVERSITY</textPath></text>
<text font-family="Liberation Serif" font-weight="bold" font-size="5.200" fill="#fff" letter-spacing="0.600"><textPath href="#b4" startOffset="3.500">1898</textPath></text></svg>
<svg style="left:1151px;top:478px" width="50" height="50" viewBox="0 0 50 50"><defs><clipPath id="c5"><circle cx="25" cy="25" r="24.700"/></clipPath><linearGradient id="g5" x1="0" y1="0" x2="0" y2="1"><stop offset="0" stop-color="#2a68bd"/><stop offset="0.350" stop-color="#3f80d2"/><stop offset="0.560" stop-color="#6aa4e4"/><stop offset="0.660" stop-color="#a4caee"/></linearGradient><linearGradient id="w5" x1="0" y1="0" x2="0" y2="1"><stop offset="0" stop-color="#12508a"/><stop offset="0.500" stop-color="#17709c"/><stop offset="1" stop-color="#2aa0b4"/></linearGradient></defs>
<g clip-path="url(#c5)"><rect width="50" height="50" fill="url(#g5)"/><ellipse cx="10" cy="30.500" rx="9" ry="1.400" fill="#e6f0fa" opacity="0.800"/><ellipse cx="40" cy="30.300" rx="7" ry="1.600" fill="#f2f7fc" opacity="0.900"/><ellipse cx="25" cy="31.800" rx="25" ry="1.300" fill="#c4dcf2" opacity="0.800"/>
<rect y="33.500" width="50" height="8.500" fill="url(#w5)"/><rect y="41" width="50" height="1.400" fill="#eef6f2"/><rect y="42" width="50" height="9" fill="#efdcb0"/>
<path d="M28.200 32.500Q29.200 31.300 30.200 32.500L30.800 36.500L30 37L29.800 42.500H28.800L28.500 37L27.800 36.500Z" fill="#16222f"/><path d="M28.700 37.500H30V40H28.700Z" fill="#d9d2c0"/></g></svg>
<svg style="left:1151px;top:580.500px" width="50" height="50" viewBox="0 0 50 50"><defs><clipPath id="c6"><circle cx="25" cy="25" r="24.700"/></clipPath><linearGradient id="g6" x1="0" y1="0" x2="0" y2="1"><stop offset="0" stop-color="#9db9e0"/><stop offset="0.500" stop-color="#b4cbe8"/><stop offset="0.850" stop-color="#d6deea"/></linearGradient></defs>
<g clip-path="url(#c6)"><rect width="50" height="50" fill="url(#g6)"/><ellipse cx="12" cy="13" rx="13" ry="7" fill="#eef2f8" opacity="0.850"/><ellipse cx="36" cy="17" rx="10" ry="4" fill="#f1f4f9" opacity="0.800"/><ellipse cx="8" cy="28" rx="9" ry="6" fill="#e6ecf4" opacity="0.800"/><ellipse cx="30" cy="8" rx="9" ry="4" fill="#c9d8ec" opacity="0.700"/>
<path d="M0 39.500Q8 40 14 41Q25 43 36 44.500L50 43V50H0Z" fill="#a98455"/><path d="M14 41Q25 43 36 44.500L34 47Q22 45 10 42Z" fill="#8f6c44" opacity="0.600"/>
<ellipse cx="40" cy="40" rx="6.500" ry="4.500" fill="#8d7f72" opacity="0.850"/>
<g fill="none" stroke="#3b2f2b" stroke-linecap="round"><path d="M28.500 44Q29 39 28 35Q27.500 30 28.500 25" stroke-width="2.200"/><path d="M28 36Q23 33 20 27Q18 23 15 21" stroke-width="1.500"/><path d="M28.300 30Q32 27 37 27.500Q40 27 42 25" stroke-width="1.300"/>
<path d="M28.500 26Q28 21 30 17M28.500 27Q25 22 23 16Q22 14 22.500 12M20 27Q14 28 9 26M18 24Q12 22 8 23M15 21Q12 17 12.500 14M37 27.500Q39 31 42 32M33 28Q35 23 38 21Q40 20 41 18M30 17Q33 15 34 13M23 16Q19 15 17 17M20 29Q16 32 12 32Q9 33 7 32M24 32Q20 35 16 35M30 21Q33 20 35 22" stroke-width="0.800"/>
<path d="M9 26Q6 27 4 26M8 23Q6 21 4 21.500M12.500 14Q11 12 11.500 10M22.500 12Q24 10 23.500 8M34 13Q36 12 37 13M41 18Q43 17 43.500 18.500M42 25Q44 24 45 25M42 32Q44 33 45 32M17 17Q15 16 14 17.500M12 32Q10 30.500 8 31M16 35Q13 36.500 11 36M38 21Q39 18.500 41 19M26 20Q25 17 26 15M32 25Q34 24 36 25" stroke-width="0.550"/></g></g></svg>
<div class="a" style="left:1093.5px;top:124.5px;width:129.0px;height:21.400px;background:rgba(12,12,13,0.880)"></div>
<svg style="left:1095px;top:127.5px" width="34" height="16" viewBox="0 0 34 16"><rect x="0.500" y="1.500" width="13" height="9.500" rx="1.500" fill="#fff"/><path d="M4 13.500H10" stroke="#fff" stroke-width="1.500" stroke-linecap="round"/><path d="M3.800 8.800Q4.300 5.800 7.800 5.800V4.200L10.800 6.600L7.800 9V7.500Q5.800 7.400 3.800 8.800Z" fill="#111"/>
<rect x="23.500" y="0.500" width="5.500" height="9.500" rx="2.750" fill="#fff"/><path d="M21.500 7Q21.500 11.800 26.250 11.800T31 7M26.250 11.800V14.500" fill="none" stroke="#fff" stroke-width="1.100" stroke-linecap="round"/></svg>
<svg style="left:1134.5px;top:138.74px" width="1" height="1"><text class="s" x="0" y="0" font-size="10.8" fill="#fff">吴余青的屏幕共享</text></svg>
<div class="a" style="left:1093.5px;top:227.0px;width:128.5px;height:21.400px;background:rgba(12,12,13,0.880)"></div>
<svg style="left:1098.0px;top:230.3px" width="14" height="15" viewBox="0 0 14 15"><rect x="4.500" y="1" width="5" height="8.500" rx="2.500" fill="#fff"/><path d="M2.500 7Q2.500 11.300 7 11.300T11.500 7M7 11.300V13.500" fill="none" stroke="#fff" stroke-width="1.100" stroke-linecap="round"/><path d="M1.500 13L12.500 1.500" stroke="#e0453f" stroke-width="1.300"/></svg>
<svg style="left:1117.5px;top:241.24px" width="1" height="1"><text class="s" x="0" y="0" font-size="10.8" fill="#fff">陕西科技大学-贺雪梅</text></svg>
<div class="a" style="left:1093.500px;top:329.2px;width:21.400px;height:21.400px;background:#f5821f"></div>
<svg style="left:1093.500px;top:329.2px" width="21.400" height="21.400" viewBox="0 0 21 21"><circle cx="10.500" cy="7.500" r="3.500" fill="#fff"/><path d="M3.500 18Q3.500 12 10.500 12T17.500 18Z" fill="#fff"/></svg>
<div class="a" style="left:1115.0px;top:329.2px;width:61.0px;height:21.400px;background:rgba(12,12,13,0.880)"></div>
<svg style="left:1120.0px;top:332.5px" width="14" height="15" viewBox="0 0 14 15"><rect x="4.500" y="1" width="5" height="8.500" rx="2.500" fill="#fff"/><path d="M2.500 7Q2.500 11.300 7 11.300T11.500 7M7 11.300V13.500" fill="none" stroke="#fff" stroke-width="1.100" stroke-linecap="round"/><path d="M1.500 13L12.500 1.500" stroke="#e0453f" stroke-width="1.300"/></svg>
<svg style="left:1139.5px;top:343.44px" width="1" height="1"><text class="s" x="0" y="0" font-size="10.8" fill="#fff">赵相宜</text></svg>
<div class="a" style="left:1093.5px;top:431.0px;width:49.0px;height:21.400px;background:rgba(12,12,13,0.880)"></div>
<svg style="left:1098.0px;top:434.3px" width="14" height="15" viewBox="0 0 14 15"><rect x="4.500" y="1" width="5" height="8.500" rx="2.500" fill="#fff"/><path d="M2.500 7Q2.500 11.300 7 11.300T11.500 7M7 11.300V13.500" fill="none" stroke="#fff" stroke-width="1.100" stroke-linecap="round"/><path d="M1.500 13L12.500 1.500" stroke="#e0453f" stroke-width="1.300"/></svg>
<svg style="left:1117.5px;top:445.24px" width="1" height="1"><text class="s" x="0" y="0" font-size="10.8" fill="#fff">林梅</text></svg>
<div class="a" style="left:1093.5px;top:533.2px;width:60.0px;height:21.400px;background:rgba(12,12,13,0.880)"></div>
<svg style="left:1098.0px;top:536.5px" width="14" height="15" viewBox="0 0 14 15"><rect x="4.500" y="1" width="5" height="8.500" rx="2.500" fill="#fff"/><path d="M2.500 7Q2.500 11.300 7 11.300T11.500 7M7 11.300V13.500" fill="none" stroke="#fff" stroke-width="1.100" stroke-linecap="round"/><path d="M1.500 13L12.500 1.500" stroke="#e0453f" stroke-width="1.300"/></svg>
<svg style="left:1117.5px;top:547.44px" width="1" height="1"><text class="s" x="0" y="0" font-size="10.8" fill="#fff">田龙过</text></svg>
<div class="a" style="left:1093.5px;top:635.1px;width:62.0px;height:21.400px;background:rgba(12,12,13,0.880)"></div>
<svg style="left:1098.0px;top:638.4px" width="14" height="15" viewBox="0 0 14 15"><rect x="4.500" y="1" width="5" height="8.500" rx="2.500" fill="#fff"/><path d="M2.500 7Q2.500 11.300 7 11.300T11.500 7M7 11.300V13.500" fill="none" stroke="#fff" stroke-width="1.100" stroke-linecap="round"/><path d="M1.500 13L12.500 1.500" stroke="#e0453f" stroke-width="1.300"/></svg>
<svg style="left:1117.5px;top:649.61px" width="1" height="1"><text class="s" x="0" y="0" font-size="11" fill="#fff">Oriana</text></svg>
<div class="a" style="left:1076.500px;top:484px;width:5.500px;height:40px;border-radius:2.750px;background:#6b6d70"></div>
<div class="a" style="left:1077px;top:511.500px;width:4.500px;height:12px;border-radius:0 0 2.250px 2.250px;background:repeating-linear-gradient(180deg,#3fc25a 0,#3fc25a 2px,#2a7a3a 2px,#2a7a3a 3px)"></div>
<div class="a" style="left:991px;top:169.500px;width:241px;height:34.500px;border-radius:4px;background:rgba(40,41,44,0.960)"></div>
<div class="a" style="left:1026px;top:170px;width:1px;height:33.500px;background:#1a1b1c"></div>
<svg style="left:1001px;top:177px" width="15" height="18" viewBox="0 0 15 18"><rect x="5" y="1" width="5" height="9" rx="2.500" fill="#6a6c70"/><path d="M3 7.500Q3 12 7.500 12T12 7.500M7.500 12V15.500M5 15.500H10" fill="none" stroke="#6a6c70" stroke-width="1.100" stroke-linecap="round"/><path d="M1.500 14.500L13.500 2" stroke="#d8443e" stroke-width="1.200"/></svg>
<svg style="left:1033.5px;top:190.66px" width="1" height="1"><text class="s" x="0" y="0" font-size="12" fill="#fff">正在讲话: 吴余青;</text></svg>
<svg style="left:1140px;top:173px" width="48" height="27" viewBox="0 0 48 27"><defs><linearGradient id="tm1" x1="0" y1="1" x2="1" y2="0"><stop offset="0" stop-color="#3c3e41"/><stop offset="1" stop-color="#5a5c60"/></linearGradient></defs><path d="M2.500 13.500L14 2Q15 1.200 16 2L27.500 13.500L15 25.500Z" fill="url(#tm1)"/><path d="M18.500 14.500L30 3Q31 2.200 32 3L44.500 14.500Q45.300 15.500 44.500 16.300L35 25.500H29.500Z" fill="url(#tm1)" opacity="0.900"/></svg>
<!--SOGOU-->
<div class="a" style="left:556.500px;top:20.500px;width:152.500px;height:25px;background:#fff;border:0.500px solid #d5dde8;border-radius:3px;box-shadow:0 0 2px rgba(120,140,170,0.500)"></div>
<div class="a" style="left:684px;top:21.500px;width:24.500px;height:23px;background:linear-gradient(90deg,#f0f7f3,#f4eef9)"></div>
<svg style="left:530px;top:15px" width="180" height="34" viewBox="0 0 180 34">
<g transform="translate(17.500 17) rotate(-14)"><rect x="-13.500" y="-12.500" width="27" height="25" rx="4" fill="#f2611d"/><path d="M7.500 -5.500Q1 -10 -5 -6T-1 0.500T6 5.500T-8 6.500" fill="none" stroke="#fff" stroke-width="4.300" stroke-linecap="round"/></g>
<g fill="none" stroke="#1a73d9" stroke-width="1.800"><path d="M41 13.500H53V21H41ZM47 9.500V26.500"/></g>
<circle cx="67.500" cy="16.500" r="1.300" fill="none" stroke="#1a73d9" stroke-width="1.100"/><path d="M73.500 20Q75.500 20 74.500 22.500T72.500 24.500" fill="none" stroke="#1a73d9" stroke-width="1.700" stroke-linecap="round"/>
<rect x="91" y="10.500" width="6" height="11" rx="3" fill="#1a73d9"/><path d="M88.700 18.500Q88.700 24 94 24T99.300 18.500M94 24V27" fill="none" stroke="#1a73d9" stroke-width="1.300" stroke-linecap="round"/>
<rect x="112.500" y="12.500" width="13.500" height="11" rx="1.500" fill="none" stroke="#1a73d9" stroke-width="1.500"/><path d="M115 15.500H123.500M115 18H123.500M116.500 20.800H122" stroke="#1a73d9" stroke-width="1.300" stroke-dasharray="1.400 0.900"/>
<path d="M139.500 12L136 14L137.500 17.500L139.500 16.800V24.500H149V16.800L151 17.500L152.500 14L149 12Q144.300 14.500 139.500 12Z" fill="#1a73d9"/>
<rect x="160" y="12" width="5" height="5" rx="1" fill="#7b6fd6"/><rect x="166.500" y="12" width="5" height="5" rx="1" fill="#5a86e0"/><rect x="160" y="18.500" width="5" height="5" rx="1" fill="#b06ab0"/><rect x="166.500" y="18.500" width="5" height="5" rx="1" fill="#8a6fd0"/>
</svg>
<!--WINCTL-->
<svg style="left:1186px;top:8px" width="76" height="14" viewBox="0 0 76 14"><g fill="none" stroke="#222" stroke-width="1.100"><path d="M3 7.500H13"/><path d="M33 5H40V12H33ZM35 5V3H42V10H40"/><path d="M62.500 2.500L71.500 11.500M71.500 2.500L62.500 11.500"/></g></svg>
</body></html>
